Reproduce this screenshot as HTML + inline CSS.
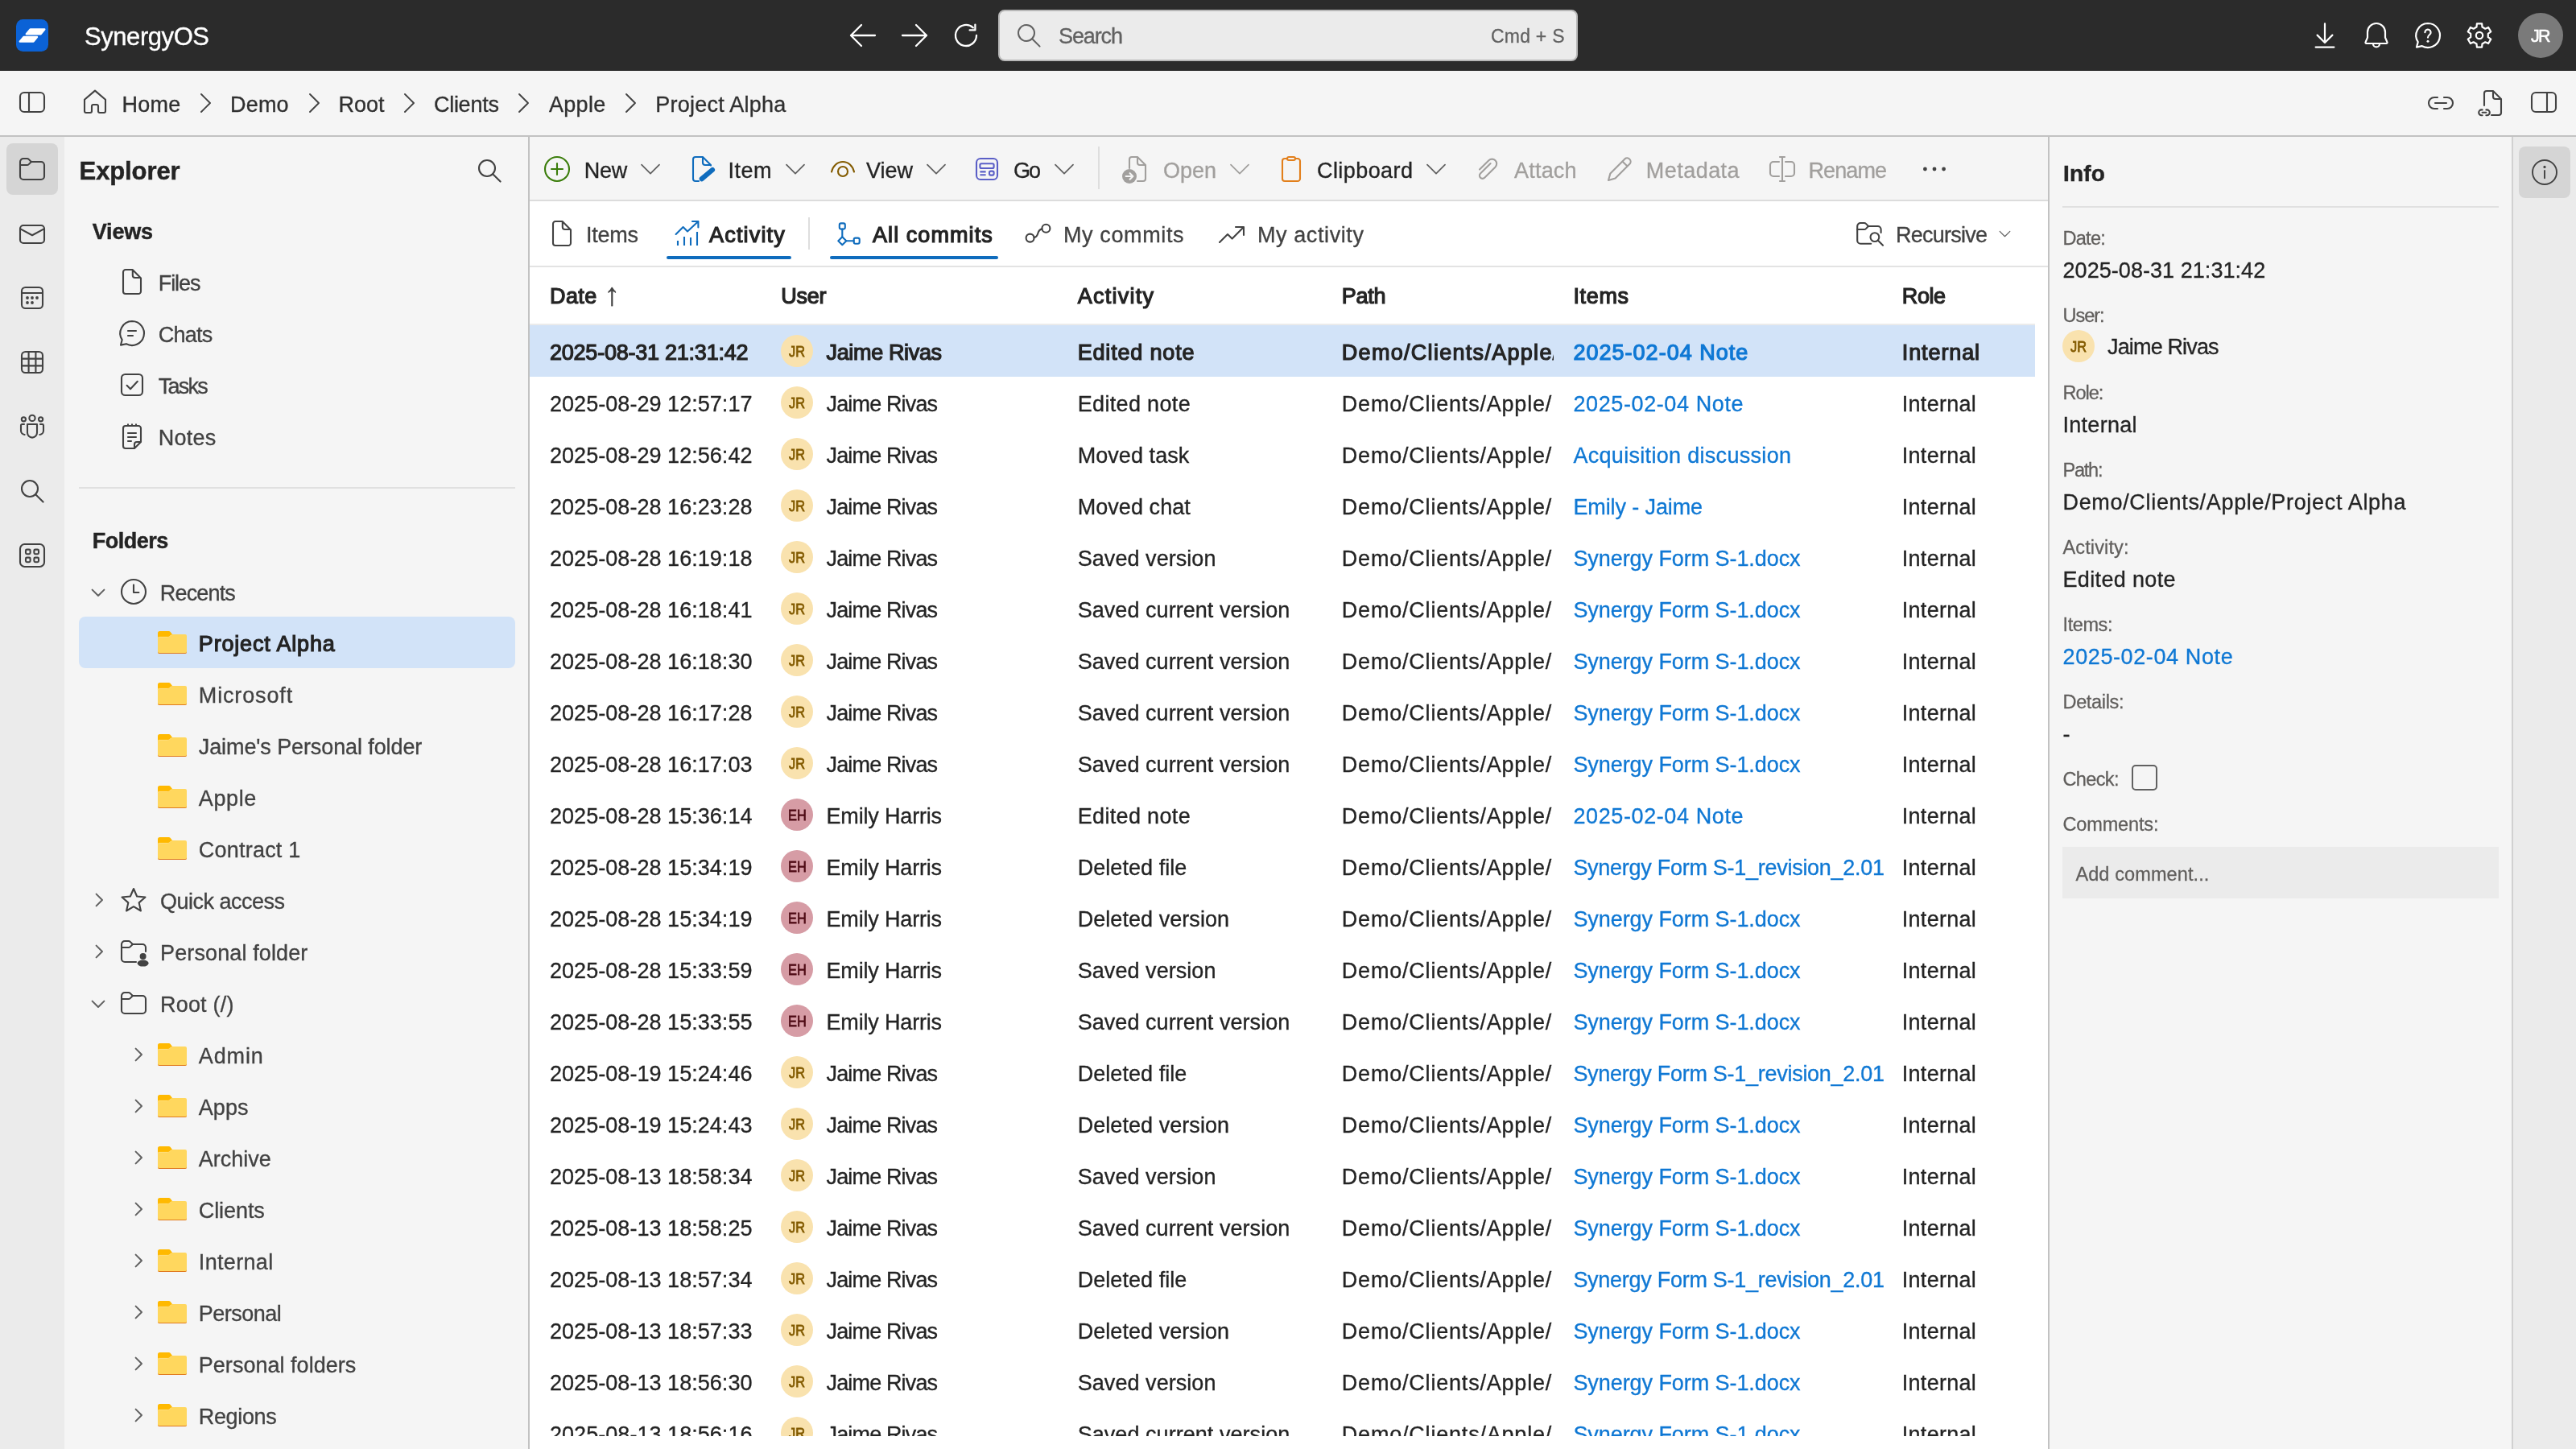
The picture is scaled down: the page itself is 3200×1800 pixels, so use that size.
<!DOCTYPE html>
<html lang="en"><head><meta charset="utf-8"><title>SynergyOS</title><style>
html,body{margin:0;padding:0}
body{width:3200px;height:1800px;position:relative;overflow:hidden;background:#fff;font-family:"Liberation Sans",sans-serif}
#root{position:absolute;left:0;top:0;width:3200px;height:1800px;will-change:transform}
.b{position:absolute}
.t{position:absolute;white-space:nowrap;line-height:40px;height:40px}
.ic{position:absolute;overflow:visible}
.clip{position:absolute;overflow:hidden}
</style></head><body><div id="root">
<div class="b" style="left:0px;top:0px;width:3200px;height:88px;background:#2b2b2b;"></div>
<div class="b" style="left:0px;top:88px;width:3200px;height:81px;background:#f5f5f5;"></div>
<div class="b" style="left:0px;top:168px;width:3200px;height:2px;background:#c2c2c2;"></div>
<div class="b" style="left:0px;top:170px;width:80px;height:1630px;background:#ebebeb;"></div>
<div class="b" style="left:80px;top:170px;width:577px;height:1630px;background:#f5f5f5;"></div>
<div class="b" style="left:656px;top:170px;width:2px;height:1630px;background:#c2c2c2;"></div>
<div class="b" style="left:658px;top:170px;width:1886px;height:78px;background:#f5f5f5;"></div>
<div class="b" style="left:658px;top:248px;width:1886px;height:2px;background:#dcdcdc;"></div>
<div class="b" style="left:658px;top:250px;width:1886px;height:1550px;background:#fff;"></div>
<div class="b" style="left:658px;top:330px;width:1886px;height:2px;background:#e3e3e3;"></div>
<div class="b" style="left:2544px;top:170px;width:2px;height:1630px;background:#c2c2c2;"></div>
<div class="b" style="left:2546px;top:170px;width:574px;height:1630px;background:#f5f5f5;"></div>
<div class="b" style="left:3120px;top:170px;width:2px;height:1630px;background:#d1d1d1;"></div>
<div class="b" style="left:3122px;top:170px;width:78px;height:1630px;background:#ebebeb;"></div>
<svg class="ic" style="left:20px;top:24px" width="40" height="40" viewBox="0 0 40 40"><rect width="40" height="40" rx="8.500" fill="#0b62d6"/><g fill="#fff" stroke="#fff" stroke-width="2.400" stroke-linejoin="round"><path d="M17.600 12.400H35.300L30.600 18.300H12.800z"/><path d="M9.700 21.900H26L21.500 27.600H4.800z"/></g></svg>
<div class="t" style="left:105px;top:25.5px;font-size:31px;color:#fff;-webkit-text-stroke:0.37px #fff;letter-spacing:-0.440px;">SynergyOS</div>
<svg class="ic" style="left:1051.5px;top:24px;color:#ffffff" width="40" height="40" viewBox="0 0 20 20" fill="none" stroke="currentColor" stroke-width="1.15" stroke-linecap="round" stroke-linejoin="round"><path d="M17.500 10h-15M9 3.500 2.500 10 9 16.500"/></svg>
<svg class="ic" style="left:1116px;top:24px;color:#ffffff" width="40" height="40" viewBox="0 0 20 20" fill="none" stroke="currentColor" stroke-width="1.15" stroke-linecap="round" stroke-linejoin="round"><path d="M2.500 10h15M11 3.500 17.500 10 11 16.500"/></svg>
<svg class="ic" style="left:1180px;top:24px;color:#ffffff" width="40" height="40" viewBox="0 0 20 20" fill="none" stroke="currentColor" stroke-width="1.15" stroke-linecap="round" stroke-linejoin="round"><path d="M16.500 10a6.500 6.500 0 1 1-2.100-4.800M15.700 3.300v3.400h-3.400"/></svg>
<div class="b" style="left:1240px;top:12px;width:720px;height:64px;background:#ebebeb;border:2px solid #b8b8b8;border-radius:8px;box-sizing:border-box;"></div>
<svg class="ic" style="left:1258px;top:24px;color:#616161" width="40" height="40" viewBox="0 0 20 20" fill="none" stroke="currentColor" stroke-width="1" stroke-linecap="round" stroke-linejoin="round"><circle cx="8.500" cy="8.500" r="5"/><path d="M12.100 12.100 16.800 16.800"/></svg>
<div class="t" style="left:1315px;top:25px;font-size:27px;color:#616161;-webkit-text-stroke:0.32px #616161;letter-spacing:-1.110px;">Search</div>
<div class="t" style="left:1852px;top:25px;font-size:23px;color:#616161;-webkit-text-stroke:0.28px #616161;letter-spacing:0.231px;">Cmd + S</div>
<svg class="ic" style="left:2868px;top:24px;color:#ffffff" width="40" height="40" viewBox="0 0 20 20" fill="none" stroke="currentColor" stroke-width="1.1" stroke-linecap="round" stroke-linejoin="round"><path d="M10 2.700v11.500M5.300 9.800 10 14.500l4.700-4.700M4.300 17.300h11.400"/></svg>
<svg class="ic" style="left:2932px;top:24px;color:#ffffff" width="40" height="40" viewBox="0 0 20 20" fill="none" stroke="currentColor" stroke-width="1.1" stroke-linecap="round" stroke-linejoin="round"><path d="M10 2.500a5.500 5.500 0 0 0-5.500 5.500v3.300l-1.200 2.800a.6.6 0 0 0 .55.9h12.300a.6.6 0 0 0 .55-.9l-1.200-2.800V8A5.500 5.500 0 0 0 10 2.500zM8 15.200a2 2 0 0 0 4 0"/></svg>
<svg class="ic" style="left:2996px;top:24px;color:#ffffff" width="40" height="40" viewBox="0 0 20 20" fill="none" stroke="currentColor" stroke-width="1.1" stroke-linecap="round" stroke-linejoin="round"><path d="M10 2.500a7.500 7.500 0 1 1-3.600 14.080L3 17.300l.85-3.250A7.500 7.500 0 0 1 10 2.500z"/><path d="M8.200 8.100a1.800 1.800 0 1 1 2.900 1.400c-.65.5-1.100.9-1.100 1.800"/><circle cx="10" cy="13.600" r=".75" fill="currentColor" stroke="none"/></svg>
<svg class="ic" style="left:3060px;top:24px;color:#ffffff" width="40" height="40" viewBox="0 0 20 20" fill="none" stroke="currentColor" stroke-width="1.1" stroke-linecap="round" stroke-linejoin="round"><path d="M8.25 4.79 L8.44 2.66 L11.56 2.66 L11.75 4.79 L13.64 5.87 L15.57 4.98 L17.13 7.68 L15.39 8.91 L15.39 11.09 L17.13 12.32 L15.57 15.02 L13.64 14.13 L11.75 15.21 L11.56 17.34 L8.44 17.34 L8.25 15.21 L6.36 14.13 L4.43 15.02 L2.87 12.32 L4.61 11.09 L4.61 8.91 L2.87 7.68 L4.43 4.98 L6.36 5.87Z"/><circle cx="10" cy="10" r="2.100"/></svg>
<div class="b" style="left:3128px;top:16px;width:56px;height:56px;border-radius:50%;background:#7a7a7a"></div>
<div class="t" style="left:3144px;top:25px;font-size:21.5px;color:#fff;letter-spacing:-1.777px;-webkit-text-stroke:0.6px #fff;">JR</div>
<svg class="ic" style="left:20px;top:107px;color:#424242" width="40" height="40" viewBox="0 0 20 20" fill="none" stroke="currentColor" stroke-width="1.05" stroke-linecap="round" stroke-linejoin="round"><rect x="2.5" y="4" width="15" height="12" rx="2.5"/><path d="M8 4v12"/></svg>
<svg class="ic" style="left:98px;top:107px;color:#424242" width="40" height="40" viewBox="0 0 20 20" fill="none" stroke="currentColor" stroke-width="1.05" stroke-linecap="round" stroke-linejoin="round"><path d="M3.5 8.4 10 2.8l6.5 5.6v7.1a1 1 0 0 1-1 1H13a1 1 0 0 1-1-1v-3a1 1 0 0 0-1-1H9a1 1 0 0 0-1 1v3a1 1 0 0 1-1 1H4.500a1 1 0 0 1-1-1z"/></svg>
<div class="t" style="left:151.6px;top:110px;font-size:27px;color:#303030;-webkit-text-stroke:0.32px #303030;letter-spacing:0.192px;">Home</div>
<div class="t" style="left:286px;top:110px;font-size:27px;color:#303030;-webkit-text-stroke:0.32px #303030;letter-spacing:0.192px;">Demo</div>
<div class="t" style="left:420.6px;top:110px;font-size:27px;color:#303030;-webkit-text-stroke:0.32px #303030;letter-spacing:-0.078px;">Root</div>
<div class="t" style="left:538.9px;top:110px;font-size:27px;color:#303030;-webkit-text-stroke:0.32px #303030;letter-spacing:-0.255px;">Clients</div>
<div class="t" style="left:681.9px;top:110px;font-size:27px;color:#303030;-webkit-text-stroke:0.32px #303030;letter-spacing:0.335px;">Apple</div>
<div class="t" style="left:814.3px;top:110px;font-size:27px;color:#303030;-webkit-text-stroke:0.32px #303030;letter-spacing:0.241px;">Project Alpha</div>
<svg class="ic" style="left:235px;top:108px;color:#424242" width="40" height="40" viewBox="0 0 20 20" fill="none" stroke="currentColor" stroke-width="0.95" stroke-linecap="round" stroke-linejoin="round"><path d="M7.5 4.500 13 10l-5.500 5.500"/></svg>
<svg class="ic" style="left:370px;top:108px;color:#424242" width="40" height="40" viewBox="0 0 20 20" fill="none" stroke="currentColor" stroke-width="0.95" stroke-linecap="round" stroke-linejoin="round"><path d="M7.5 4.500 13 10l-5.500 5.500"/></svg>
<svg class="ic" style="left:488.3px;top:108px;color:#424242" width="40" height="40" viewBox="0 0 20 20" fill="none" stroke="currentColor" stroke-width="0.95" stroke-linecap="round" stroke-linejoin="round"><path d="M7.5 4.500 13 10l-5.500 5.500"/></svg>
<svg class="ic" style="left:630.4px;top:108px;color:#424242" width="40" height="40" viewBox="0 0 20 20" fill="none" stroke="currentColor" stroke-width="0.95" stroke-linecap="round" stroke-linejoin="round"><path d="M7.5 4.500 13 10l-5.500 5.500"/></svg>
<svg class="ic" style="left:762.7px;top:108px;color:#424242" width="40" height="40" viewBox="0 0 20 20" fill="none" stroke="currentColor" stroke-width="0.95" stroke-linecap="round" stroke-linejoin="round"><path d="M7.5 4.500 13 10l-5.500 5.500"/></svg>
<svg class="ic" style="left:3012px;top:108px;color:#424242" width="40" height="40" viewBox="0 0 20 20" fill="none" stroke="currentColor" stroke-width="1.05" stroke-linecap="round" stroke-linejoin="round"><path d="M8 6.500H6a3.500 3.500 0 0 0 0 7h2M12 6.500h2a3.500 3.500 0 0 1 0 7h-2M6.500 10h7"/></svg>
<svg class="ic" style="left:3074.5px;top:108px;color:#424242" width="40" height="40" viewBox="0 0 20 20" fill="none" stroke="currentColor" stroke-width="1.05" stroke-linecap="round" stroke-linejoin="round"><path d="M10 17.500h4.500A1.500 1.500 0 0 0 16 16V7.500l-5-5H7A1.500 1.500 0 0 0 5.500 4v7.500M11 2.500V6a1.500 1.500 0 0 0 1.500 1.500H16"/><path d="M4.300 14.200H3.800a1.700 1.700 0 0 0 0 3.400h.5M6.700 14.200h.5a1.700 1.700 0 0 1 0 3.400h-.5M4.300 15.900h2.400"/></svg>
<svg class="ic" style="left:3140px;top:107px;color:#424242" width="40" height="40" viewBox="0 0 20 20" fill="none" stroke="currentColor" stroke-width="1.05" stroke-linecap="round" stroke-linejoin="round"><rect x="2.5" y="4" width="15" height="12" rx="2.5"/><path d="M12 4v12"/></svg>
<div class="b" style="left:8px;top:178px;width:64px;height:64px;background:#d5d5d5;border-radius:8px;"></div>
<svg class="ic" style="left:20px;top:190px;color:#424242" width="40" height="40" viewBox="0 0 20 20" fill="none" stroke="currentColor" stroke-width="1.05" stroke-linecap="round" stroke-linejoin="round"><path d="M2.500 5.500a2 2 0 0 1 2-2h2.300a1.500 1.500 0 0 1 1.060.44L9.420 5.500H15.500a2 2 0 0 1 2 2v7a2 2 0 0 1-2 2h-11a2 2 0 0 1-2-2z"/><path d="M2.500 7.500h4.300a1.500 1.500 0 0 0 1.060-.44L9.420 5.500"/></svg>
<svg class="ic" style="left:20px;top:270.5px;color:#424242" width="40" height="40" viewBox="0 0 20 20" fill="none" stroke="currentColor" stroke-width="1.05" stroke-linecap="round" stroke-linejoin="round"><rect x="2.500" y="4.500" width="15" height="11" rx="2"/><path d="M2.700 6.700 10 10.600l7.300-3.900"/></svg>
<svg class="ic" style="left:20px;top:350px;color:#424242" width="40" height="40" viewBox="0 0 20 20" fill="none" stroke="currentColor" stroke-width="1.05" stroke-linecap="round" stroke-linejoin="round"><rect x="3.500" y="3.500" width="13" height="13" rx="2.300"/><path d="M3.500 7h13"/><g fill="currentColor" stroke="none"><circle cx="7" cy="10" r=".95"/><circle cx="10" cy="10" r=".95"/><circle cx="13" cy="10" r=".95"/><circle cx="7" cy="13" r=".95"/><circle cx="10" cy="13" r=".95"/></g></svg>
<svg class="ic" style="left:20px;top:430px;color:#424242" width="40" height="40" viewBox="0 0 20 20" fill="none" stroke="currentColor" stroke-width="1.05" stroke-linecap="round" stroke-linejoin="round"><rect x="3.500" y="3.500" width="13" height="13" rx="2.300"/><path d="M3.500 7.800h13M3.500 12.200h13M7.800 3.500v13M12.200 3.500v13"/></svg>
<svg class="ic" style="left:20px;top:510px;color:#424242" width="40" height="40" viewBox="0 0 20 20" fill="none" stroke="currentColor" stroke-width="1.05" stroke-linecap="round" stroke-linejoin="round"><circle cx="10" cy="4.700" r="1.800"/><circle cx="4.700" cy="5.400" r="1.300"/><circle cx="15.300" cy="5.400" r="1.300"/><path d="M7 8.500h6v5.300a3 3 0 0 1-6 0z" /><path d="M5 8.500H3.700a.7.700 0 0 0-.7.700v3.300a2.500 2.500 0 0 0 2.300 2.500M15 8.500h1.300a.7.700 0 0 1 .7.700v3.300a2.500 2.500 0 0 1-2.300 2.500"/></svg>
<svg class="ic" style="left:20px;top:590px;color:#424242" width="40" height="40" viewBox="0 0 20 20" fill="none" stroke="currentColor" stroke-width="1.05" stroke-linecap="round" stroke-linejoin="round"><circle cx="8.500" cy="8.500" r="5"/><path d="M12.100 12.100 16.800 16.800"/></svg>
<svg class="ic" style="left:20px;top:670px;color:#424242" width="40" height="40" viewBox="0 0 20 20" fill="none" stroke="currentColor" stroke-width="1.05" stroke-linecap="round" stroke-linejoin="round"><rect x="2.500" y="3" width="15" height="14" rx="2.800"/><rect x="6" y="6.300" width="2.800" height="2.800" rx=".7"/><rect x="11.200" y="6.300" width="2.800" height="2.800" rx=".7"/><rect x="6" y="11.300" width="2.800" height="2.800" rx=".7"/><rect x="11.200" y="11.300" width="2.800" height="2.800" rx=".7"/></svg>
<div class="t" style="left:98.6px;top:192.5px;font-size:31px;color:#242424;font-weight:700;-webkit-text-stroke:0.45px #242424;letter-spacing:-0.110px;">Explorer</div>
<svg class="ic" style="left:588px;top:192px;color:#424242" width="40" height="40" viewBox="0 0 20 20" fill="none" stroke="currentColor" stroke-width="1.05" stroke-linecap="round" stroke-linejoin="round"><circle cx="8.500" cy="8.500" r="5"/><path d="M12.100 12.100 16.800 16.800"/></svg>
<div class="t" style="left:114.7px;top:268px;font-size:27px;color:#242424;font-weight:700;-webkit-text-stroke:0.45px #242424;letter-spacing:-0.164px;">Views</div>
<svg class="ic" style="left:144px;top:330px;color:#424242" width="40" height="40" viewBox="0 0 20 20" fill="none" stroke="currentColor" stroke-width="1.05" stroke-linecap="round" stroke-linejoin="round"><path d="M6 2.500h4.300l5.200 5.200V16a1.500 1.500 0 0 1-1.500 1.500H6A1.500 1.500 0 0 1 4.500 16V4A1.500 1.500 0 0 1 6 2.500zM10.400 2.700V6a1.500 1.500 0 0 0 1.500 1.500h3.400"/></svg>
<div class="t" style="left:196.8px;top:332px;font-size:27px;color:#424242;-webkit-text-stroke:0.32px #424242;letter-spacing:-1.102px;">Files</div>
<svg class="ic" style="left:144px;top:394px;color:#424242" width="40" height="40" viewBox="0 0 20 20" fill="none" stroke="currentColor" stroke-width="1.05" stroke-linecap="round" stroke-linejoin="round"><path d="M10 2.500a7.500 7.500 0 1 1-3.600 14.080L3 17.300l.85-3.250A7.500 7.500 0 0 1 10 2.500zM7.500 8.500h5M7.500 11.500h3"/></svg>
<div class="t" style="left:196.8px;top:396px;font-size:27px;color:#424242;-webkit-text-stroke:0.32px #424242;letter-spacing:-0.758px;">Chats</div>
<svg class="ic" style="left:144px;top:458px;color:#424242" width="40" height="40" viewBox="0 0 20 20" fill="none" stroke="currentColor" stroke-width="1.05" stroke-linecap="round" stroke-linejoin="round"><rect x="3.500" y="3.500" width="13" height="13" rx="2.300"/><path d="M6.800 10.400 9 12.600l4.400-4.700"/></svg>
<div class="t" style="left:196.8px;top:460px;font-size:27px;color:#424242;-webkit-text-stroke:0.32px #424242;letter-spacing:-1.754px;">Tasks</div>
<svg class="ic" style="left:144px;top:522px;color:#424242" width="40" height="40" viewBox="0 0 20 20" fill="none" stroke="currentColor" stroke-width="1.05" stroke-linecap="round" stroke-linejoin="round"><path d="M6 3.500h8A1.500 1.500 0 0 1 15.500 5v8.500l-4 4H6A1.500 1.500 0 0 1 4.500 16V5A1.500 1.500 0 0 1 6 3.500zM15.300 13.500H13a1.500 1.500 0 0 0-1.500 1.500v2.300M7.500 2.600v.900M10 2.600v.900M12.500 2.600v.900M7.500 8h5M7.500 10.500h5M7.500 13h2"/></svg>
<div class="t" style="left:196.8px;top:524px;font-size:27px;color:#424242;-webkit-text-stroke:0.32px #424242;letter-spacing:0.242px;">Notes</div>
<div class="b" style="left:98px;top:605px;width:542px;height:2px;background:#e0e0e0;"></div>
<div class="t" style="left:114.7px;top:652px;font-size:27px;color:#242424;font-weight:700;-webkit-text-stroke:0.45px #242424;letter-spacing:-0.503px;">Folders</div>
<svg class="ic" style="left:110px;top:723.5px" width="24" height="24" viewBox="0 0 12 12" fill="none" stroke="#616161" stroke-width="1" stroke-linecap="round" stroke-linejoin="round"><path d="M2.300 4.300 6 8l3.700-3.700"/></svg>
<svg class="ic" style="left:146px;top:715px;color:#424242" width="40" height="40" viewBox="0 0 20 20" fill="none" stroke="currentColor" stroke-width="1.05" stroke-linecap="round" stroke-linejoin="round"><circle cx="10" cy="10" r="7.500"/><path d="M10 5.800V10.500h3.200"/></svg>
<div class="t" style="left:198.8px;top:717px;font-size:27px;color:#424242;-webkit-text-stroke:0.32px #424242;letter-spacing:-0.842px;">Recents</div>
<div class="b" style="left:98px;top:766px;width:542px;height:64px;background:#d2e3f8;border-radius:8px;"></div>
<svg class="ic" style="left:196px;top:784px" width="36" height="28" viewBox="0 0 36 28"><path d="M0 2.500A2.500 2.500 0 0 1 2.500 0h11.200a2.500 2.500 0 0 1 1.800.760L18 4v6H0z" fill="#ffb900"/><path d="M0 9.300a1.500 1.500 0 0 1 1.500-1.500h11.200a2.500 2.500 0 0 0 1.800-.760L17.300 4.400a1.500 1.500 0 0 1 1-.4H34a2 2 0 0 1 2 2v20a2 2 0 0 1-2 2H2a2 2 0 0 1-2-2z" fill="#ffd75e"/><path d="M0 8.900a1.500 1.500 0 0 1 1.500-1.500h11.200a2.500 2.500 0 0 0 1.800-.760L17.300 4.400" fill="none" stroke="#ffe9a3" stroke-width=".8"/><path d="M0 25.500V26a2 2 0 0 0 2 2h32a2 2 0 0 0 2-2v-.5a2 2 0 0 1-2 1.500H2a2 2 0 0 1-2-1.500z" fill="#e07a1f"/></svg>
<div class="t" style="left:246.8px;top:780px;font-size:27px;color:#242424;-webkit-text-stroke:1.21px #242424;letter-spacing:0.825px;">Project Alpha</div>
<svg class="ic" style="left:196px;top:848px" width="36" height="28" viewBox="0 0 36 28"><path d="M0 2.500A2.500 2.500 0 0 1 2.500 0h11.200a2.500 2.500 0 0 1 1.800.760L18 4v6H0z" fill="#ffb900"/><path d="M0 9.300a1.500 1.500 0 0 1 1.500-1.500h11.200a2.500 2.500 0 0 0 1.800-.760L17.300 4.400a1.500 1.500 0 0 1 1-.4H34a2 2 0 0 1 2 2v20a2 2 0 0 1-2 2H2a2 2 0 0 1-2-2z" fill="#ffd75e"/><path d="M0 8.900a1.500 1.500 0 0 1 1.500-1.500h11.200a2.500 2.500 0 0 0 1.800-.760L17.300 4.400" fill="none" stroke="#ffe9a3" stroke-width=".8"/><path d="M0 25.500V26a2 2 0 0 0 2 2h32a2 2 0 0 0 2-2v-.5a2 2 0 0 1-2 1.500H2a2 2 0 0 1-2-1.500z" fill="#e07a1f"/></svg>
<div class="t" style="left:246.8px;top:844px;font-size:27px;color:#424242;-webkit-text-stroke:0.32px #424242;letter-spacing:0.860px;">Microsoft</div>
<svg class="ic" style="left:196px;top:912px" width="36" height="28" viewBox="0 0 36 28"><path d="M0 2.500A2.500 2.500 0 0 1 2.500 0h11.200a2.500 2.500 0 0 1 1.800.760L18 4v6H0z" fill="#ffb900"/><path d="M0 9.300a1.500 1.500 0 0 1 1.500-1.500h11.200a2.500 2.500 0 0 0 1.800-.760L17.300 4.400a1.500 1.500 0 0 1 1-.4H34a2 2 0 0 1 2 2v20a2 2 0 0 1-2 2H2a2 2 0 0 1-2-2z" fill="#ffd75e"/><path d="M0 8.900a1.500 1.500 0 0 1 1.500-1.500h11.200a2.500 2.500 0 0 0 1.800-.760L17.300 4.400" fill="none" stroke="#ffe9a3" stroke-width=".8"/><path d="M0 25.500V26a2 2 0 0 0 2 2h32a2 2 0 0 0 2-2v-.5a2 2 0 0 1-2 1.500H2a2 2 0 0 1-2-1.500z" fill="#e07a1f"/></svg>
<div class="t" style="left:246.8px;top:908px;font-size:27px;color:#424242;-webkit-text-stroke:0.32px #424242;letter-spacing:-0.104px;">Jaime&#x27;s Personal folder</div>
<svg class="ic" style="left:196px;top:976px" width="36" height="28" viewBox="0 0 36 28"><path d="M0 2.500A2.500 2.500 0 0 1 2.500 0h11.200a2.500 2.500 0 0 1 1.800.760L18 4v6H0z" fill="#ffb900"/><path d="M0 9.300a1.500 1.500 0 0 1 1.500-1.500h11.200a2.500 2.500 0 0 0 1.800-.760L17.300 4.400a1.500 1.500 0 0 1 1-.4H34a2 2 0 0 1 2 2v20a2 2 0 0 1-2 2H2a2 2 0 0 1-2-2z" fill="#ffd75e"/><path d="M0 8.900a1.500 1.500 0 0 1 1.500-1.500h11.200a2.500 2.500 0 0 0 1.800-.760L17.300 4.400" fill="none" stroke="#ffe9a3" stroke-width=".8"/><path d="M0 25.500V26a2 2 0 0 0 2 2h32a2 2 0 0 0 2-2v-.5a2 2 0 0 1-2 1.500H2a2 2 0 0 1-2-1.500z" fill="#e07a1f"/></svg>
<div class="t" style="left:246.8px;top:972px;font-size:27px;color:#424242;-webkit-text-stroke:0.32px #424242;letter-spacing:0.610px;">Apple</div>
<svg class="ic" style="left:196px;top:1040px" width="36" height="28" viewBox="0 0 36 28"><path d="M0 2.500A2.500 2.500 0 0 1 2.500 0h11.200a2.500 2.500 0 0 1 1.800.760L18 4v6H0z" fill="#ffb900"/><path d="M0 9.300a1.500 1.500 0 0 1 1.500-1.500h11.200a2.500 2.500 0 0 0 1.800-.760L17.300 4.400a1.500 1.500 0 0 1 1-.4H34a2 2 0 0 1 2 2v20a2 2 0 0 1-2 2H2a2 2 0 0 1-2-2z" fill="#ffd75e"/><path d="M0 8.900a1.500 1.500 0 0 1 1.500-1.500h11.200a2.500 2.500 0 0 0 1.800-.760L17.300 4.400" fill="none" stroke="#ffe9a3" stroke-width=".8"/><path d="M0 25.500V26a2 2 0 0 0 2 2h32a2 2 0 0 0 2-2v-.5a2 2 0 0 1-2 1.500H2a2 2 0 0 1-2-1.500z" fill="#e07a1f"/></svg>
<div class="t" style="left:246.8px;top:1036px;font-size:27px;color:#424242;-webkit-text-stroke:0.32px #424242;letter-spacing:0.215px;">Contract 1</div>
<svg class="ic" style="left:111.4px;top:1106px" width="24" height="24" viewBox="0 0 12 12" fill="none" stroke="#616161" stroke-width="1" stroke-linecap="round" stroke-linejoin="round"><path d="M4.300 2.300 8 6 4.300 9.700"/></svg>
<svg class="ic" style="left:146px;top:1098px;color:#424242" width="40" height="40" viewBox="0 0 20 20" fill="none" stroke="currentColor" stroke-width="1.05" stroke-linecap="round" stroke-linejoin="round"><path d="M10.00 3.00 L12.06 7.77 L17.23 8.25 L13.33 11.68 L14.47 16.75 L10.00 14.10 L5.53 16.75 L6.67 11.68 L2.77 8.25 L7.94 7.77Z"/></svg>
<div class="t" style="left:199px;top:1100px;font-size:27px;color:#424242;-webkit-text-stroke:0.32px #424242;letter-spacing:-0.514px;">Quick access</div>
<svg class="ic" style="left:111.4px;top:1170px" width="24" height="24" viewBox="0 0 12 12" fill="none" stroke="#616161" stroke-width="1" stroke-linecap="round" stroke-linejoin="round"><path d="M4.300 2.300 8 6 4.300 9.700"/></svg>
<svg class="ic" style="left:146px;top:1162px;color:#424242" width="40" height="40" viewBox="0 0 20 20" fill="none" stroke="currentColor" stroke-width="1.05" stroke-linecap="round" stroke-linejoin="round"><path d="M11.500 16.500H4.500a2 2 0 0 1-2-2v-9a2 2 0 0 1 2-2h2.300a1.500 1.500 0 0 1 1.060.44L9.420 5.500H15.500a2 2 0 0 1 2 2V10"/><path d="M2.500 7.500h4.300a1.500 1.500 0 0 0 1.060-.44L9.420 5.500"/><circle cx="15.800" cy="13" r="2" fill="currentColor" stroke="none"/><ellipse cx="15.800" cy="17.300" rx="3.500" ry="2" fill="currentColor" stroke="none"/></svg>
<div class="t" style="left:199px;top:1164px;font-size:27px;color:#424242;-webkit-text-stroke:0.32px #424242;letter-spacing:0.121px;">Personal folder</div>
<svg class="ic" style="left:110px;top:1235px" width="24" height="24" viewBox="0 0 12 12" fill="none" stroke="#616161" stroke-width="1" stroke-linecap="round" stroke-linejoin="round"><path d="M2.300 4.300 6 8l3.700-3.700"/></svg>
<svg class="ic" style="left:146px;top:1226px;color:#424242" width="40" height="40" viewBox="0 0 20 20" fill="none" stroke="currentColor" stroke-width="1.05" stroke-linecap="round" stroke-linejoin="round"><path d="M2.500 5.500a2 2 0 0 1 2-2h2.300a1.500 1.500 0 0 1 1.060.44L9.420 5.500H15.500a2 2 0 0 1 2 2v7a2 2 0 0 1-2 2h-11a2 2 0 0 1-2-2z"/><path d="M2.500 7.500h4.300a1.500 1.500 0 0 0 1.060-.44L9.420 5.500"/></svg>
<div class="t" style="left:199px;top:1228px;font-size:27px;color:#424242;-webkit-text-stroke:0.32px #424242;letter-spacing:0.197px;">Root (/)</div>
<svg class="ic" style="left:159.5px;top:1298px" width="24" height="24" viewBox="0 0 12 12" fill="none" stroke="#616161" stroke-width="1" stroke-linecap="round" stroke-linejoin="round"><path d="M4.300 2.300 8 6 4.300 9.700"/></svg>
<svg class="ic" style="left:196px;top:1296px" width="36" height="28" viewBox="0 0 36 28"><path d="M0 2.500A2.500 2.500 0 0 1 2.500 0h11.200a2.500 2.500 0 0 1 1.800.760L18 4v6H0z" fill="#ffb900"/><path d="M0 9.300a1.500 1.500 0 0 1 1.500-1.500h11.200a2.500 2.500 0 0 0 1.800-.760L17.300 4.400a1.500 1.500 0 0 1 1-.4H34a2 2 0 0 1 2 2v20a2 2 0 0 1-2 2H2a2 2 0 0 1-2-2z" fill="#ffd75e"/><path d="M0 8.900a1.500 1.500 0 0 1 1.500-1.500h11.200a2.500 2.500 0 0 0 1.800-.760L17.300 4.400" fill="none" stroke="#ffe9a3" stroke-width=".8"/><path d="M0 25.500V26a2 2 0 0 0 2 2h32a2 2 0 0 0 2-2v-.5a2 2 0 0 1-2 1.500H2a2 2 0 0 1-2-1.500z" fill="#e07a1f"/></svg>
<div class="t" style="left:246.8px;top:1292px;font-size:27px;color:#424242;-webkit-text-stroke:0.32px #424242;letter-spacing:0.866px;">Admin</div>
<svg class="ic" style="left:159.5px;top:1362px" width="24" height="24" viewBox="0 0 12 12" fill="none" stroke="#616161" stroke-width="1" stroke-linecap="round" stroke-linejoin="round"><path d="M4.300 2.300 8 6 4.300 9.700"/></svg>
<svg class="ic" style="left:196px;top:1360px" width="36" height="28" viewBox="0 0 36 28"><path d="M0 2.500A2.500 2.500 0 0 1 2.500 0h11.200a2.500 2.500 0 0 1 1.800.760L18 4v6H0z" fill="#ffb900"/><path d="M0 9.300a1.500 1.500 0 0 1 1.500-1.500h11.200a2.500 2.500 0 0 0 1.800-.760L17.300 4.400a1.500 1.500 0 0 1 1-.4H34a2 2 0 0 1 2 2v20a2 2 0 0 1-2 2H2a2 2 0 0 1-2-2z" fill="#ffd75e"/><path d="M0 8.900a1.500 1.500 0 0 1 1.500-1.500h11.200a2.500 2.500 0 0 0 1.800-.760L17.300 4.400" fill="none" stroke="#ffe9a3" stroke-width=".8"/><path d="M0 25.500V26a2 2 0 0 0 2 2h32a2 2 0 0 0 2-2v-.5a2 2 0 0 1-2 1.500H2a2 2 0 0 1-2-1.500z" fill="#e07a1f"/></svg>
<div class="t" style="left:246.8px;top:1356px;font-size:27px;color:#424242;-webkit-text-stroke:0.32px #424242;letter-spacing:0.052px;">Apps</div>
<svg class="ic" style="left:159.5px;top:1426px" width="24" height="24" viewBox="0 0 12 12" fill="none" stroke="#616161" stroke-width="1" stroke-linecap="round" stroke-linejoin="round"><path d="M4.300 2.300 8 6 4.300 9.700"/></svg>
<svg class="ic" style="left:196px;top:1424px" width="36" height="28" viewBox="0 0 36 28"><path d="M0 2.500A2.500 2.500 0 0 1 2.500 0h11.200a2.500 2.500 0 0 1 1.800.760L18 4v6H0z" fill="#ffb900"/><path d="M0 9.300a1.500 1.500 0 0 1 1.500-1.500h11.200a2.500 2.500 0 0 0 1.800-.760L17.300 4.400a1.500 1.500 0 0 1 1-.4H34a2 2 0 0 1 2 2v20a2 2 0 0 1-2 2H2a2 2 0 0 1-2-2z" fill="#ffd75e"/><path d="M0 8.900a1.500 1.500 0 0 1 1.500-1.500h11.200a2.500 2.500 0 0 0 1.800-.760L17.300 4.400" fill="none" stroke="#ffe9a3" stroke-width=".8"/><path d="M0 25.500V26a2 2 0 0 0 2 2h32a2 2 0 0 0 2-2v-.5a2 2 0 0 1-2 1.500H2a2 2 0 0 1-2-1.500z" fill="#e07a1f"/></svg>
<div class="t" style="left:246.8px;top:1420px;font-size:27px;color:#424242;-webkit-text-stroke:0.32px #424242;letter-spacing:-0.006px;">Archive</div>
<svg class="ic" style="left:159.5px;top:1490px" width="24" height="24" viewBox="0 0 12 12" fill="none" stroke="#616161" stroke-width="1" stroke-linecap="round" stroke-linejoin="round"><path d="M4.300 2.300 8 6 4.300 9.700"/></svg>
<svg class="ic" style="left:196px;top:1488px" width="36" height="28" viewBox="0 0 36 28"><path d="M0 2.500A2.500 2.500 0 0 1 2.500 0h11.200a2.500 2.500 0 0 1 1.800.760L18 4v6H0z" fill="#ffb900"/><path d="M0 9.300a1.500 1.500 0 0 1 1.500-1.500h11.200a2.500 2.500 0 0 0 1.800-.760L17.300 4.400a1.500 1.500 0 0 1 1-.4H34a2 2 0 0 1 2 2v20a2 2 0 0 1-2 2H2a2 2 0 0 1-2-2z" fill="#ffd75e"/><path d="M0 8.900a1.500 1.500 0 0 1 1.500-1.500h11.200a2.500 2.500 0 0 0 1.800-.760L17.300 4.400" fill="none" stroke="#ffe9a3" stroke-width=".8"/><path d="M0 25.500V26a2 2 0 0 0 2 2h32a2 2 0 0 0 2-2v-.5a2 2 0 0 1-2 1.500H2a2 2 0 0 1-2-1.500z" fill="#e07a1f"/></svg>
<div class="t" style="left:246.8px;top:1484px;font-size:27px;color:#424242;-webkit-text-stroke:0.32px #424242;letter-spacing:-0.089px;">Clients</div>
<svg class="ic" style="left:159.5px;top:1554px" width="24" height="24" viewBox="0 0 12 12" fill="none" stroke="#616161" stroke-width="1" stroke-linecap="round" stroke-linejoin="round"><path d="M4.300 2.300 8 6 4.300 9.700"/></svg>
<svg class="ic" style="left:196px;top:1552px" width="36" height="28" viewBox="0 0 36 28"><path d="M0 2.500A2.500 2.500 0 0 1 2.500 0h11.200a2.500 2.500 0 0 1 1.800.760L18 4v6H0z" fill="#ffb900"/><path d="M0 9.300a1.500 1.500 0 0 1 1.500-1.500h11.200a2.500 2.500 0 0 0 1.800-.760L17.300 4.400a1.500 1.500 0 0 1 1-.4H34a2 2 0 0 1 2 2v20a2 2 0 0 1-2 2H2a2 2 0 0 1-2-2z" fill="#ffd75e"/><path d="M0 8.900a1.500 1.500 0 0 1 1.500-1.500h11.200a2.500 2.500 0 0 0 1.800-.760L17.300 4.400" fill="none" stroke="#ffe9a3" stroke-width=".8"/><path d="M0 25.500V26a2 2 0 0 0 2 2h32a2 2 0 0 0 2-2v-.5a2 2 0 0 1-2 1.500H2a2 2 0 0 1-2-1.500z" fill="#e07a1f"/></svg>
<div class="t" style="left:246.8px;top:1548px;font-size:27px;color:#424242;-webkit-text-stroke:0.32px #424242;letter-spacing:0.334px;">Internal</div>
<svg class="ic" style="left:159.5px;top:1618px" width="24" height="24" viewBox="0 0 12 12" fill="none" stroke="#616161" stroke-width="1" stroke-linecap="round" stroke-linejoin="round"><path d="M4.300 2.300 8 6 4.300 9.700"/></svg>
<svg class="ic" style="left:196px;top:1616px" width="36" height="28" viewBox="0 0 36 28"><path d="M0 2.500A2.500 2.500 0 0 1 2.500 0h11.200a2.500 2.500 0 0 1 1.800.760L18 4v6H0z" fill="#ffb900"/><path d="M0 9.300a1.500 1.500 0 0 1 1.500-1.500h11.200a2.500 2.500 0 0 0 1.800-.760L17.300 4.400a1.500 1.500 0 0 1 1-.4H34a2 2 0 0 1 2 2v20a2 2 0 0 1-2 2H2a2 2 0 0 1-2-2z" fill="#ffd75e"/><path d="M0 8.900a1.500 1.500 0 0 1 1.500-1.500h11.200a2.500 2.500 0 0 0 1.800-.760L17.300 4.400" fill="none" stroke="#ffe9a3" stroke-width=".8"/><path d="M0 25.500V26a2 2 0 0 0 2 2h32a2 2 0 0 0 2-2v-.5a2 2 0 0 1-2 1.500H2a2 2 0 0 1-2-1.500z" fill="#e07a1f"/></svg>
<div class="t" style="left:246.8px;top:1612px;font-size:27px;color:#424242;-webkit-text-stroke:0.32px #424242;letter-spacing:-0.510px;">Personal</div>
<svg class="ic" style="left:159.5px;top:1682px" width="24" height="24" viewBox="0 0 12 12" fill="none" stroke="#616161" stroke-width="1" stroke-linecap="round" stroke-linejoin="round"><path d="M4.300 2.300 8 6 4.300 9.700"/></svg>
<svg class="ic" style="left:196px;top:1680px" width="36" height="28" viewBox="0 0 36 28"><path d="M0 2.500A2.500 2.500 0 0 1 2.500 0h11.200a2.500 2.500 0 0 1 1.800.760L18 4v6H0z" fill="#ffb900"/><path d="M0 9.300a1.500 1.500 0 0 1 1.500-1.500h11.200a2.500 2.500 0 0 0 1.800-.760L17.300 4.400a1.500 1.500 0 0 1 1-.4H34a2 2 0 0 1 2 2v20a2 2 0 0 1-2 2H2a2 2 0 0 1-2-2z" fill="#ffd75e"/><path d="M0 8.900a1.500 1.500 0 0 1 1.500-1.500h11.200a2.500 2.500 0 0 0 1.800-.760L17.300 4.400" fill="none" stroke="#ffe9a3" stroke-width=".8"/><path d="M0 25.500V26a2 2 0 0 0 2 2h32a2 2 0 0 0 2-2v-.5a2 2 0 0 1-2 1.500H2a2 2 0 0 1-2-1.500z" fill="#e07a1f"/></svg>
<div class="t" style="left:246.8px;top:1676px;font-size:27px;color:#424242;-webkit-text-stroke:0.32px #424242;letter-spacing:0.026px;">Personal folders</div>
<svg class="ic" style="left:159.5px;top:1746px" width="24" height="24" viewBox="0 0 12 12" fill="none" stroke="#616161" stroke-width="1" stroke-linecap="round" stroke-linejoin="round"><path d="M4.300 2.300 8 6 4.300 9.700"/></svg>
<svg class="ic" style="left:196px;top:1744px" width="36" height="28" viewBox="0 0 36 28"><path d="M0 2.500A2.500 2.500 0 0 1 2.500 0h11.200a2.500 2.500 0 0 1 1.800.760L18 4v6H0z" fill="#ffb900"/><path d="M0 9.300a1.500 1.500 0 0 1 1.500-1.500h11.200a2.500 2.500 0 0 0 1.800-.760L17.300 4.400a1.500 1.500 0 0 1 1-.4H34a2 2 0 0 1 2 2v20a2 2 0 0 1-2 2H2a2 2 0 0 1-2-2z" fill="#ffd75e"/><path d="M0 8.900a1.500 1.500 0 0 1 1.500-1.500h11.200a2.500 2.500 0 0 0 1.800-.760L17.300 4.400" fill="none" stroke="#ffe9a3" stroke-width=".8"/><path d="M0 25.500V26a2 2 0 0 0 2 2h32a2 2 0 0 0 2-2v-.5a2 2 0 0 1-2 1.500H2a2 2 0 0 1-2-1.500z" fill="#e07a1f"/></svg>
<div class="t" style="left:246.8px;top:1740px;font-size:27px;color:#424242;-webkit-text-stroke:0.32px #424242;letter-spacing:-0.344px;">Regions</div>
<svg class="ic" style="left:672px;top:190px;color:#3b7d0b" width="40" height="40" viewBox="0 0 20 20" fill="none" stroke="currentColor" stroke-width="1.05" stroke-linecap="round" stroke-linejoin="round"><circle cx="10" cy="10" r="7.500"/><path d="M10 6.500v7M6.500 10h7"/></svg>
<div class="t" style="left:725.7px;top:192px;font-size:27px;color:#242424;-webkit-text-stroke:0.32px #242424;letter-spacing:-0.207px;">New</div>
<svg class="ic" style="left:787.7px;top:190px;color:#616161" width="40" height="40" viewBox="0 0 20 20" fill="none" stroke="currentColor" stroke-width="0.9" stroke-linecap="round" stroke-linejoin="round"><path d="M4.500 7.300 10 12.800l5.500-5.500"/></svg>
<svg class="ic" style="left:854px;top:190px;color:#0f6cbd" width="40" height="40" viewBox="0 0 20 20" fill="none" stroke="currentColor" stroke-width="1.05" stroke-linecap="round" stroke-linejoin="round"><path d="M7 17.500H5A1.500 1.500 0 0 1 3.500 16V4A1.500 1.500 0 0 1 5 2.500h4.500l5 5v.3M9.500 2.700V6A1.500 1.500 0 0 0 11 7.500h3.300"/><path d="M8.900 16.100 15.500 10.500" stroke-width="3.100"/></svg>
<div class="t" style="left:904.4px;top:192px;font-size:27px;color:#242424;-webkit-text-stroke:0.32px #242424;letter-spacing:0.563px;">Item</div>
<svg class="ic" style="left:967.5px;top:190px;color:#616161" width="40" height="40" viewBox="0 0 20 20" fill="none" stroke="currentColor" stroke-width="0.9" stroke-linecap="round" stroke-linejoin="round"><path d="M4.500 7.300 10 12.800l5.500-5.500"/></svg>
<svg class="ic" style="left:1027px;top:190px;color:#835b00" width="40" height="40" viewBox="0 0 20 20" fill="none" stroke="currentColor" stroke-width="1.05" stroke-linecap="round" stroke-linejoin="round"><path d="M3 11.700C3.800 8.100 6.600 5.500 10 5.500s6.200 2.600 7 6.200"/><circle cx="10" cy="11.500" r="3"/></svg>
<div class="t" style="left:1075.9px;top:192px;font-size:27px;color:#242424;-webkit-text-stroke:0.32px #242424;letter-spacing:-0.012px;">View</div>
<svg class="ic" style="left:1142.5px;top:190px;color:#616161" width="40" height="40" viewBox="0 0 20 20" fill="none" stroke="currentColor" stroke-width="0.9" stroke-linecap="round" stroke-linejoin="round"><path d="M4.500 7.300 10 12.800l5.500-5.500"/></svg>
<svg class="ic" style="left:1206px;top:190px;color:#5b5fc7" width="40" height="40" viewBox="0 0 20 20" fill="none" stroke="currentColor" stroke-width="1.05" stroke-linecap="round" stroke-linejoin="round"><rect x="3.500" y="3.500" width="13" height="13" rx="2.500"/><rect x="5.700" y="6.600" width="8.600" height="2.900" rx=".9"/><path d="M5.700 11.700h3.600M5.700 13.600h3.600" stroke-linecap="butt"/><rect x="11.500" y="11.300" width="2.800" height="2.500" rx=".9"/></svg>
<div class="t" style="left:1259px;top:192px;font-size:27px;color:#242424;-webkit-text-stroke:0.32px #242424;letter-spacing:-2.018px;">Go</div>
<svg class="ic" style="left:1302px;top:190px;color:#616161" width="40" height="40" viewBox="0 0 20 20" fill="none" stroke="currentColor" stroke-width="0.9" stroke-linecap="round" stroke-linejoin="round"><path d="M4.500 7.300 10 12.800l5.500-5.500"/></svg>
<div class="b" style="left:1364px;top:182px;width:2px;height:53px;background:#dedede;"></div>
<svg class="ic" style="left:1390.5px;top:190px;color:#a19f9d" width="40" height="40" viewBox="0 0 20 20" fill="none" stroke="currentColor" stroke-width="1.05" stroke-linecap="round" stroke-linejoin="round"><path d="M11 17.500h3.500A1.500 1.500 0 0 0 16 16V7.500l-5-5H7.500A1.500 1.500 0 0 0 6 4v5.500M11 2.700V6a1.500 1.500 0 0 0 1.500 1.500h3.300"/><circle cx="6" cy="14.500" r="4.500" fill="currentColor" stroke="none"/><path d="M3.800 14.500h4.200M6.300 12.600l1.900 1.900-1.900 1.900" stroke="#f5f5f5"/></svg>
<div class="t" style="left:1445px;top:192px;font-size:27px;color:#a19f9d;-webkit-text-stroke:0.32px #a19f9d;letter-spacing:-0.017px;">Open</div>
<svg class="ic" style="left:1520px;top:190px;color:#a19f9d" width="40" height="40" viewBox="0 0 20 20" fill="none" stroke="currentColor" stroke-width="0.9" stroke-linecap="round" stroke-linejoin="round"><path d="M4.500 7.300 10 12.800l5.500-5.500"/></svg>
<svg class="ic" style="left:1583.5px;top:190px;color:#e27f1b" width="40" height="40" viewBox="0 0 20 20" fill="none" stroke="currentColor" stroke-width="1.05" stroke-linecap="round" stroke-linejoin="round"><path d="M7.500 3.500H6A1.500 1.500 0 0 0 4.500 5v11A1.500 1.500 0 0 0 6 17.500h8a1.500 1.500 0 0 0 1.500-1.500V5A1.500 1.500 0 0 0 14 3.500h-1.500"/><rect x="7.500" y="2.500" width="5" height="2" rx="1"/></svg>
<div class="t" style="left:1636px;top:192px;font-size:27px;color:#242424;-webkit-text-stroke:0.32px #242424;letter-spacing:0.428px;">Clipboard</div>
<svg class="ic" style="left:1764px;top:190px;color:#616161" width="40" height="40" viewBox="0 0 20 20" fill="none" stroke="currentColor" stroke-width="0.9" stroke-linecap="round" stroke-linejoin="round"><path d="M4.500 7.300 10 12.800l5.500-5.500"/></svg>
<svg class="ic" style="left:1828px;top:190px;color:#a19f9d" width="40" height="40" viewBox="0 0 20 20" fill="none" stroke="currentColor" stroke-width="1.05" stroke-linecap="round" stroke-linejoin="round"><path d="M5.300 10.800 11 5.100a2.900 2.900 0 0 1 4.100 4.100l-6.700 6.700a1.800 1.800 0 0 1-2.600-2.600l6.300-6.300" transform="translate(-.3 -.5)"/></svg>
<div class="t" style="left:1881px;top:192px;font-size:27px;color:#a19f9d;-webkit-text-stroke:0.32px #a19f9d;letter-spacing:0.211px;">Attach</div>
<svg class="ic" style="left:1992px;top:190px;color:#a19f9d" width="40" height="40" viewBox="0 0 20 20" fill="none" stroke="currentColor" stroke-width="1.05" stroke-linecap="round" stroke-linejoin="round"><path d="M13.200 3.700a2.200 2.200 0 0 1 3.100 3.100L7.300 15.800 3 17l1.200-4.300zM11.700 5.200l3.100 3.100"/></svg>
<div class="t" style="left:2044.8px;top:192px;font-size:27px;color:#a19f9d;-webkit-text-stroke:0.32px #a19f9d;letter-spacing:0.460px;">Metadata</div>
<svg class="ic" style="left:2194px;top:190px;color:#a19f9d" width="40" height="40" viewBox="0 0 20 20" fill="none" stroke="currentColor" stroke-width="1.05" stroke-linecap="round" stroke-linejoin="round"><path d="M8 5.500H4.500a2 2 0 0 0-2 2v5a2 2 0 0 0 2 2H8M12 5.500h3.500a2 2 0 0 1 2 2v5a2 2 0 0 1-2 2H12M10 2.500v15M8.500 2.500h3M8.500 17.500h3"/></svg>
<div class="t" style="left:2246.5px;top:192px;font-size:27px;color:#a19f9d;-webkit-text-stroke:0.32px #a19f9d;letter-spacing:-0.912px;">Rename</div>
<svg class="ic" style="left:2383px;top:190px;color:#424242" width="40" height="40" viewBox="0 0 20 20" fill="none" stroke="currentColor" stroke-width="1.05" stroke-linecap="round" stroke-linejoin="round"><g fill="currentColor" stroke="none"><circle cx="4.200" cy="10" r="1.200"/><circle cx="10" cy="10" r="1.200"/><circle cx="15.800" cy="10" r="1.200"/></g></svg>
<svg class="ic" style="left:678px;top:270px;color:#424242" width="40" height="40" viewBox="0 0 20 20" fill="none" stroke="currentColor" stroke-width="1.05" stroke-linecap="round" stroke-linejoin="round"><path d="M6 2.500h4.300l5.200 5.200V16a1.500 1.500 0 0 1-1.500 1.500H6A1.500 1.500 0 0 1 4.500 16V4A1.500 1.500 0 0 1 6 2.500zM10.400 2.700V6a1.500 1.500 0 0 0 1.500 1.500h3.400"/></svg>
<div class="t" style="left:728px;top:272px;font-size:27px;color:#424242;-webkit-text-stroke:0.32px #424242;letter-spacing:-0.253px;">Items</div>
<svg class="ic" style="left:833.5px;top:270px;color:#0f6cbd" width="40" height="40" viewBox="0 0 20 20" fill="none" stroke="currentColor" stroke-width="1.05" stroke-linecap="round" stroke-linejoin="round"><path d="M2.800 10.500 7.300 6l2.700 2.700 6.700-6.200M13 2.500h3.700v3.700"/><path d="M4 14.500v3M8 12v5.500M12 12.500v5M16 9v8.500" stroke-linecap="butt"/></svg>
<div class="t" style="left:881px;top:272px;font-size:27px;color:#242424;-webkit-text-stroke:1.21px #242424;letter-spacing:1.184px;">Activity</div>
<div class="b" style="left:828px;top:318px;width:155px;height:4px;background:#0f6cbd;border-radius:2px;"></div>
<div class="b" style="left:1004px;top:270px;width:2px;height:40px;background:#dedede;"></div>
<svg class="ic" style="left:1035px;top:270px;color:#0f6cbd" width="40" height="40" viewBox="0 0 20 20" fill="none" stroke="currentColor" stroke-width="1.05" stroke-linecap="round" stroke-linejoin="round"><rect x="3.900" y="3.700" width="3.500" height="3.600" rx="1"/><path d="M5.650 7.300v4.600M8.100 14.600h4.700"/><path d="M5.650 12.100 8.150 14.600 5.650 17.100 3.150 14.600z"/><rect x="12.850" y="12.800" width="3.500" height="3.600" rx="1"/></svg>
<div class="t" style="left:1084px;top:272px;font-size:27px;color:#242424;-webkit-text-stroke:1.21px #242424;letter-spacing:1.069px;">All commits</div>
<div class="b" style="left:1031px;top:318px;width:209px;height:4px;background:#0f6cbd;border-radius:2px;"></div>
<svg class="ic" style="left:1269px;top:270px;color:#424242" width="40" height="40" viewBox="0 0 20 20" fill="none" stroke="currentColor" stroke-width="1.05" stroke-linecap="round" stroke-linejoin="round"><circle cx="5.300" cy="12.800" r="2.500"/><circle cx="15.200" cy="6.900" r="2.500"/><path d="M7.800 12.500c1.600-.2 2-1.100 2.400-2.600s.9-2.400 2.500-2.700"/></svg>
<div class="t" style="left:1321px;top:272px;font-size:27px;color:#424242;-webkit-text-stroke:0.32px #424242;letter-spacing:0.612px;">My commits</div>
<svg class="ic" style="left:1509.7px;top:270.5px;color:#424242" width="40" height="40" viewBox="0 0 20 20" fill="none" stroke="currentColor" stroke-width="1.05" stroke-linecap="round" stroke-linejoin="round"><path d="M2.500 15 7.500 10l2.800 2.800L17 6M12.500 5.500h5v5"/></svg>
<div class="t" style="left:1562px;top:272px;font-size:27px;color:#424242;-webkit-text-stroke:0.32px #424242;letter-spacing:0.589px;">My activity</div>
<svg class="ic" style="left:2303px;top:270px;color:#424242" width="40" height="40" viewBox="0 0 20 20" fill="none" stroke="currentColor" stroke-width="1.05" stroke-linecap="round" stroke-linejoin="round"><path d="M10.600 16.400H4.100a2 2 0 0 1-2-2V5.500a2 2 0 0 1 2-2h2.300a1.500 1.500 0 0 1 1.060.440L9 5.500h5.800a2 2 0 0 1 2 2v2"/><path d="M2.100 7.500h4.300a1.500 1.500 0 0 0 1.060-.440L9 5.500"/><circle cx="12.950" cy="12.300" r="2.700"/><path d="M15 14.400l3 3"/></svg>
<div class="t" style="left:2355px;top:272px;font-size:27px;color:#424242;-webkit-text-stroke:0.32px #424242;letter-spacing:-0.755px;">Recursive</div>
<svg class="ic" style="left:2478.5px;top:278.7px;color:#616161" width="23" height="23" viewBox="0 0 20 20" fill="none" stroke="currentColor" stroke-width="1.05" stroke-linecap="round" stroke-linejoin="round"><path d="M4.500 7.300 10 12.800l5.500-5.500"/></svg>
<div class="t" style="left:683px;top:348px;font-size:27px;color:#242424;-webkit-text-stroke:1.21px #242424;letter-spacing:0.389px;">Date</div>
<div class="t" style="left:750.5px;top:345.5px;font-size:39px;color:#424242;-webkit-text-stroke:0.47px #424242;">↑</div>
<div class="t" style="left:970.3px;top:348px;font-size:27px;color:#242424;-webkit-text-stroke:1.21px #242424;letter-spacing:-0.236px;">User</div>
<div class="t" style="left:1338.7px;top:348px;font-size:27px;color:#242424;-webkit-text-stroke:1.21px #242424;letter-spacing:1.256px;">Activity</div>
<div class="t" style="left:1666.8px;top:348px;font-size:27px;color:#242424;-webkit-text-stroke:1.21px #242424;letter-spacing:-0.281px;">Path</div>
<div class="t" style="left:1954.4px;top:348px;font-size:27px;color:#242424;-webkit-text-stroke:1.21px #242424;letter-spacing:0.672px;">Items</div>
<div class="t" style="left:2362.8px;top:348px;font-size:27px;color:#242424;-webkit-text-stroke:1.21px #242424;letter-spacing:-0.410px;">Role</div>
<div class="b" style="left:658px;top:402px;width:1870px;height:2px;background:#ebebeb;"></div>
<div class="clip" style="left:658px;top:403px;width:1886px;height:1380.5px">
<div class="b" style="left:0;top:1px;width:1870px;height:64px;background:#d2e3f8"></div>
<div class="t" style="left:25px;top:15px;font-size:27px;color:#242424;-webkit-text-stroke:1.21px #242424;letter-spacing:-0.234px;">2025-08-31 21:31:42</div>
<div class="b" style="left:312px;top:13px;width:40px;height:40px;border-radius:50%;background:#f9e2ae"></div>
<div class="t" style="left:322.015px;top:13.5px;font-size:19px;color:#835b00;-webkit-text-stroke:0.8px #835b00;transform:scaleX(.86);transform-origin:0 50%;">JR</div>
<div class="t" style="left:368.5px;top:15px;font-size:27px;color:#242424;-webkit-text-stroke:1.21px #242424;letter-spacing:-0.344px;">Jaime Rivas</div>
<div class="t" style="left:680.7px;top:15px;font-size:27px;color:#242424;-webkit-text-stroke:1.21px #242424;letter-spacing:0.819px;">Edited note</div>
<div class="clip" style="left:1008.8px;top:1px;width:263.5px;height:64px">
<div class="t" style="left:0px;top:14px;font-size:27px;color:#242424;-webkit-text-stroke:1.21px #242424;letter-spacing:1.294px;">Demo/Clients/Apple/Project Alpha</div>
</div>
<div class="t" style="left:1296.4px;top:15px;font-size:27px;color:#0f78d4;-webkit-text-stroke:1.21px #0f78d4;letter-spacing:1.025px;">2025-02-04 Note</div>
<div class="t" style="left:1704.8px;top:15px;font-size:27px;color:#242424;-webkit-text-stroke:1.21px #242424;letter-spacing:0.891px;">Internal</div>
<div class="t" style="left:25px;top:79px;font-size:27px;color:#242424;-webkit-text-stroke:0.32px #242424;letter-spacing:0.043px;">2025-08-29 12:57:17</div>
<div class="b" style="left:312px;top:77px;width:40px;height:40px;border-radius:50%;background:#f9e2ae"></div>
<div class="t" style="left:322.015px;top:77.5px;font-size:19px;color:#835b00;-webkit-text-stroke:0.8px #835b00;transform:scaleX(.86);transform-origin:0 50%;">JR</div>
<div class="t" style="left:368.5px;top:79px;font-size:27px;color:#242424;-webkit-text-stroke:0.32px #242424;letter-spacing:-0.844px;">Jaime Rivas</div>
<div class="t" style="left:680.7px;top:79px;font-size:27px;color:#242424;-webkit-text-stroke:0.32px #242424;letter-spacing:0.339px;">Edited note</div>
<div class="clip" style="left:1008.8px;top:65px;width:263.5px;height:64px">
<div class="t" style="left:0px;top:14px;font-size:27px;color:#242424;-webkit-text-stroke:0.32px #242424;letter-spacing:0.799px;">Demo/Clients/Apple/Project Alpha</div>
</div>
<div class="t" style="left:1296.4px;top:79px;font-size:27px;color:#0f78d4;-webkit-text-stroke:0.32px #0f78d4;letter-spacing:0.611px;">2025-02-04 Note</div>
<div class="t" style="left:1704.8px;top:79px;font-size:27px;color:#242424;-webkit-text-stroke:0.32px #242424;letter-spacing:0.277px;">Internal</div>
<div class="t" style="left:25px;top:143px;font-size:27px;color:#242424;-webkit-text-stroke:0.32px #242424;letter-spacing:0.043px;">2025-08-29 12:56:42</div>
<div class="b" style="left:312px;top:141px;width:40px;height:40px;border-radius:50%;background:#f9e2ae"></div>
<div class="t" style="left:322.015px;top:141.5px;font-size:19px;color:#835b00;-webkit-text-stroke:0.8px #835b00;transform:scaleX(.86);transform-origin:0 50%;">JR</div>
<div class="t" style="left:368.5px;top:143px;font-size:27px;color:#242424;-webkit-text-stroke:0.32px #242424;letter-spacing:-0.844px;">Jaime Rivas</div>
<div class="t" style="left:680.7px;top:143px;font-size:27px;color:#242424;-webkit-text-stroke:0.32px #242424;letter-spacing:0.059px;">Moved task</div>
<div class="clip" style="left:1008.8px;top:129px;width:263.5px;height:64px">
<div class="t" style="left:0px;top:14px;font-size:27px;color:#242424;-webkit-text-stroke:0.32px #242424;letter-spacing:0.799px;">Demo/Clients/Apple/Project Alpha</div>
</div>
<div class="t" style="left:1296.4px;top:143px;font-size:27px;color:#0f78d4;-webkit-text-stroke:0.32px #0f78d4;letter-spacing:0.308px;">Acquisition discussion</div>
<div class="t" style="left:1704.8px;top:143px;font-size:27px;color:#242424;-webkit-text-stroke:0.32px #242424;letter-spacing:0.277px;">Internal</div>
<div class="t" style="left:25px;top:207px;font-size:27px;color:#242424;-webkit-text-stroke:0.32px #242424;letter-spacing:0.043px;">2025-08-28 16:23:28</div>
<div class="b" style="left:312px;top:205px;width:40px;height:40px;border-radius:50%;background:#f9e2ae"></div>
<div class="t" style="left:322.015px;top:205.5px;font-size:19px;color:#835b00;-webkit-text-stroke:0.8px #835b00;transform:scaleX(.86);transform-origin:0 50%;">JR</div>
<div class="t" style="left:368.5px;top:207px;font-size:27px;color:#242424;-webkit-text-stroke:0.32px #242424;letter-spacing:-0.844px;">Jaime Rivas</div>
<div class="t" style="left:680.7px;top:207px;font-size:27px;color:#242424;-webkit-text-stroke:0.32px #242424;letter-spacing:0.060px;">Moved chat</div>
<div class="clip" style="left:1008.8px;top:193px;width:263.5px;height:64px">
<div class="t" style="left:0px;top:14px;font-size:27px;color:#242424;-webkit-text-stroke:0.32px #242424;letter-spacing:0.799px;">Demo/Clients/Apple/Project Alpha</div>
</div>
<div class="t" style="left:1296.4px;top:207px;font-size:27px;color:#0f78d4;-webkit-text-stroke:0.32px #0f78d4;letter-spacing:-0.110px;">Emily - Jaime</div>
<div class="t" style="left:1704.8px;top:207px;font-size:27px;color:#242424;-webkit-text-stroke:0.32px #242424;letter-spacing:0.277px;">Internal</div>
<div class="t" style="left:25px;top:271px;font-size:27px;color:#242424;-webkit-text-stroke:0.32px #242424;letter-spacing:0.043px;">2025-08-28 16:19:18</div>
<div class="b" style="left:312px;top:269px;width:40px;height:40px;border-radius:50%;background:#f9e2ae"></div>
<div class="t" style="left:322.015px;top:269.5px;font-size:19px;color:#835b00;-webkit-text-stroke:0.8px #835b00;transform:scaleX(.86);transform-origin:0 50%;">JR</div>
<div class="t" style="left:368.5px;top:271px;font-size:27px;color:#242424;-webkit-text-stroke:0.32px #242424;letter-spacing:-0.844px;">Jaime Rivas</div>
<div class="t" style="left:680.7px;top:271px;font-size:27px;color:#242424;-webkit-text-stroke:0.32px #242424;letter-spacing:0.055px;">Saved version</div>
<div class="clip" style="left:1008.8px;top:257px;width:263.5px;height:64px">
<div class="t" style="left:0px;top:14px;font-size:27px;color:#242424;-webkit-text-stroke:0.32px #242424;letter-spacing:0.799px;">Demo/Clients/Apple/Project Alpha</div>
</div>
<div class="t" style="left:1296.4px;top:271px;font-size:27px;color:#0f78d4;-webkit-text-stroke:0.32px #0f78d4;letter-spacing:-0.070px;">Synergy Form S-1.docx</div>
<div class="t" style="left:1704.8px;top:271px;font-size:27px;color:#242424;-webkit-text-stroke:0.32px #242424;letter-spacing:0.277px;">Internal</div>
<div class="t" style="left:25px;top:335px;font-size:27px;color:#242424;-webkit-text-stroke:0.32px #242424;letter-spacing:0.043px;">2025-08-28 16:18:41</div>
<div class="b" style="left:312px;top:333px;width:40px;height:40px;border-radius:50%;background:#f9e2ae"></div>
<div class="t" style="left:322.015px;top:333.5px;font-size:19px;color:#835b00;-webkit-text-stroke:0.8px #835b00;transform:scaleX(.86);transform-origin:0 50%;">JR</div>
<div class="t" style="left:368.5px;top:335px;font-size:27px;color:#242424;-webkit-text-stroke:0.32px #242424;letter-spacing:-0.844px;">Jaime Rivas</div>
<div class="t" style="left:680.7px;top:335px;font-size:27px;color:#242424;-webkit-text-stroke:0.32px #242424;letter-spacing:0.048px;">Saved current version</div>
<div class="clip" style="left:1008.8px;top:321px;width:263.5px;height:64px">
<div class="t" style="left:0px;top:14px;font-size:27px;color:#242424;-webkit-text-stroke:0.32px #242424;letter-spacing:0.799px;">Demo/Clients/Apple/Project Alpha</div>
</div>
<div class="t" style="left:1296.4px;top:335px;font-size:27px;color:#0f78d4;-webkit-text-stroke:0.32px #0f78d4;letter-spacing:-0.070px;">Synergy Form S-1.docx</div>
<div class="t" style="left:1704.8px;top:335px;font-size:27px;color:#242424;-webkit-text-stroke:0.32px #242424;letter-spacing:0.277px;">Internal</div>
<div class="t" style="left:25px;top:399px;font-size:27px;color:#242424;-webkit-text-stroke:0.32px #242424;letter-spacing:0.043px;">2025-08-28 16:18:30</div>
<div class="b" style="left:312px;top:397px;width:40px;height:40px;border-radius:50%;background:#f9e2ae"></div>
<div class="t" style="left:322.015px;top:397.5px;font-size:19px;color:#835b00;-webkit-text-stroke:0.8px #835b00;transform:scaleX(.86);transform-origin:0 50%;">JR</div>
<div class="t" style="left:368.5px;top:399px;font-size:27px;color:#242424;-webkit-text-stroke:0.32px #242424;letter-spacing:-0.844px;">Jaime Rivas</div>
<div class="t" style="left:680.7px;top:399px;font-size:27px;color:#242424;-webkit-text-stroke:0.32px #242424;letter-spacing:0.048px;">Saved current version</div>
<div class="clip" style="left:1008.8px;top:385px;width:263.5px;height:64px">
<div class="t" style="left:0px;top:14px;font-size:27px;color:#242424;-webkit-text-stroke:0.32px #242424;letter-spacing:0.799px;">Demo/Clients/Apple/Project Alpha</div>
</div>
<div class="t" style="left:1296.4px;top:399px;font-size:27px;color:#0f78d4;-webkit-text-stroke:0.32px #0f78d4;letter-spacing:-0.070px;">Synergy Form S-1.docx</div>
<div class="t" style="left:1704.8px;top:399px;font-size:27px;color:#242424;-webkit-text-stroke:0.32px #242424;letter-spacing:0.277px;">Internal</div>
<div class="t" style="left:25px;top:463px;font-size:27px;color:#242424;-webkit-text-stroke:0.32px #242424;letter-spacing:0.043px;">2025-08-28 16:17:28</div>
<div class="b" style="left:312px;top:461px;width:40px;height:40px;border-radius:50%;background:#f9e2ae"></div>
<div class="t" style="left:322.015px;top:461.5px;font-size:19px;color:#835b00;-webkit-text-stroke:0.8px #835b00;transform:scaleX(.86);transform-origin:0 50%;">JR</div>
<div class="t" style="left:368.5px;top:463px;font-size:27px;color:#242424;-webkit-text-stroke:0.32px #242424;letter-spacing:-0.844px;">Jaime Rivas</div>
<div class="t" style="left:680.7px;top:463px;font-size:27px;color:#242424;-webkit-text-stroke:0.32px #242424;letter-spacing:0.048px;">Saved current version</div>
<div class="clip" style="left:1008.8px;top:449px;width:263.5px;height:64px">
<div class="t" style="left:0px;top:14px;font-size:27px;color:#242424;-webkit-text-stroke:0.32px #242424;letter-spacing:0.799px;">Demo/Clients/Apple/Project Alpha</div>
</div>
<div class="t" style="left:1296.4px;top:463px;font-size:27px;color:#0f78d4;-webkit-text-stroke:0.32px #0f78d4;letter-spacing:-0.070px;">Synergy Form S-1.docx</div>
<div class="t" style="left:1704.8px;top:463px;font-size:27px;color:#242424;-webkit-text-stroke:0.32px #242424;letter-spacing:0.277px;">Internal</div>
<div class="t" style="left:25px;top:527px;font-size:27px;color:#242424;-webkit-text-stroke:0.32px #242424;letter-spacing:0.043px;">2025-08-28 16:17:03</div>
<div class="b" style="left:312px;top:525px;width:40px;height:40px;border-radius:50%;background:#f9e2ae"></div>
<div class="t" style="left:322.015px;top:525.5px;font-size:19px;color:#835b00;-webkit-text-stroke:0.8px #835b00;transform:scaleX(.86);transform-origin:0 50%;">JR</div>
<div class="t" style="left:368.5px;top:527px;font-size:27px;color:#242424;-webkit-text-stroke:0.32px #242424;letter-spacing:-0.844px;">Jaime Rivas</div>
<div class="t" style="left:680.7px;top:527px;font-size:27px;color:#242424;-webkit-text-stroke:0.32px #242424;letter-spacing:0.048px;">Saved current version</div>
<div class="clip" style="left:1008.8px;top:513px;width:263.5px;height:64px">
<div class="t" style="left:0px;top:14px;font-size:27px;color:#242424;-webkit-text-stroke:0.32px #242424;letter-spacing:0.799px;">Demo/Clients/Apple/Project Alpha</div>
</div>
<div class="t" style="left:1296.4px;top:527px;font-size:27px;color:#0f78d4;-webkit-text-stroke:0.32px #0f78d4;letter-spacing:-0.070px;">Synergy Form S-1.docx</div>
<div class="t" style="left:1704.8px;top:527px;font-size:27px;color:#242424;-webkit-text-stroke:0.32px #242424;letter-spacing:0.277px;">Internal</div>
<div class="t" style="left:25px;top:591px;font-size:27px;color:#242424;-webkit-text-stroke:0.32px #242424;letter-spacing:0.043px;">2025-08-28 15:36:14</div>
<div class="b" style="left:312px;top:589px;width:40px;height:40px;border-radius:50%;background:#d69ca5"></div>
<div class="t" style="left:320.65px;top:589.5px;font-size:19px;color:#4f0c16;-webkit-text-stroke:0.8px #4f0c16;transform:scaleX(.86);transform-origin:0 50%;">EH</div>
<div class="t" style="left:368.5px;top:591px;font-size:27px;color:#242424;-webkit-text-stroke:0.32px #242424;letter-spacing:-0.173px;">Emily Harris</div>
<div class="t" style="left:680.7px;top:591px;font-size:27px;color:#242424;-webkit-text-stroke:0.32px #242424;letter-spacing:0.339px;">Edited note</div>
<div class="clip" style="left:1008.8px;top:577px;width:263.5px;height:64px">
<div class="t" style="left:0px;top:14px;font-size:27px;color:#242424;-webkit-text-stroke:0.32px #242424;letter-spacing:0.799px;">Demo/Clients/Apple/Project Alpha</div>
</div>
<div class="t" style="left:1296.4px;top:591px;font-size:27px;color:#0f78d4;-webkit-text-stroke:0.32px #0f78d4;letter-spacing:0.611px;">2025-02-04 Note</div>
<div class="t" style="left:1704.8px;top:591px;font-size:27px;color:#242424;-webkit-text-stroke:0.32px #242424;letter-spacing:0.277px;">Internal</div>
<div class="t" style="left:25px;top:655px;font-size:27px;color:#242424;-webkit-text-stroke:0.32px #242424;letter-spacing:0.043px;">2025-08-28 15:34:19</div>
<div class="b" style="left:312px;top:653px;width:40px;height:40px;border-radius:50%;background:#d69ca5"></div>
<div class="t" style="left:320.65px;top:653.5px;font-size:19px;color:#4f0c16;-webkit-text-stroke:0.8px #4f0c16;transform:scaleX(.86);transform-origin:0 50%;">EH</div>
<div class="t" style="left:368.5px;top:655px;font-size:27px;color:#242424;-webkit-text-stroke:0.32px #242424;letter-spacing:-0.173px;">Emily Harris</div>
<div class="t" style="left:680.7px;top:655px;font-size:27px;color:#242424;-webkit-text-stroke:0.32px #242424;letter-spacing:0.047px;">Deleted file</div>
<div class="clip" style="left:1008.8px;top:641px;width:263.5px;height:64px">
<div class="t" style="left:0px;top:14px;font-size:27px;color:#242424;-webkit-text-stroke:0.32px #242424;letter-spacing:0.799px;">Demo/Clients/Apple/Project Alpha</div>
</div>
<div class="t" style="left:1296.4px;top:655px;font-size:27px;color:#0f78d4;-webkit-text-stroke:0.32px #0f78d4;letter-spacing:-0.276px;">Synergy Form S-1_revision_2.01</div>
<div class="t" style="left:1704.8px;top:655px;font-size:27px;color:#242424;-webkit-text-stroke:0.32px #242424;letter-spacing:0.277px;">Internal</div>
<div class="t" style="left:25px;top:719px;font-size:27px;color:#242424;-webkit-text-stroke:0.32px #242424;letter-spacing:0.043px;">2025-08-28 15:34:19</div>
<div class="b" style="left:312px;top:717px;width:40px;height:40px;border-radius:50%;background:#d69ca5"></div>
<div class="t" style="left:320.65px;top:717.5px;font-size:19px;color:#4f0c16;-webkit-text-stroke:0.8px #4f0c16;transform:scaleX(.86);transform-origin:0 50%;">EH</div>
<div class="t" style="left:368.5px;top:719px;font-size:27px;color:#242424;-webkit-text-stroke:0.32px #242424;letter-spacing:-0.173px;">Emily Harris</div>
<div class="t" style="left:680.7px;top:719px;font-size:27px;color:#242424;-webkit-text-stroke:0.32px #242424;letter-spacing:0.052px;">Deleted version</div>
<div class="clip" style="left:1008.8px;top:705px;width:263.5px;height:64px">
<div class="t" style="left:0px;top:14px;font-size:27px;color:#242424;-webkit-text-stroke:0.32px #242424;letter-spacing:0.799px;">Demo/Clients/Apple/Project Alpha</div>
</div>
<div class="t" style="left:1296.4px;top:719px;font-size:27px;color:#0f78d4;-webkit-text-stroke:0.32px #0f78d4;letter-spacing:-0.070px;">Synergy Form S-1.docx</div>
<div class="t" style="left:1704.8px;top:719px;font-size:27px;color:#242424;-webkit-text-stroke:0.32px #242424;letter-spacing:0.277px;">Internal</div>
<div class="t" style="left:25px;top:783px;font-size:27px;color:#242424;-webkit-text-stroke:0.32px #242424;letter-spacing:0.043px;">2025-08-28 15:33:59</div>
<div class="b" style="left:312px;top:781px;width:40px;height:40px;border-radius:50%;background:#d69ca5"></div>
<div class="t" style="left:320.65px;top:781.5px;font-size:19px;color:#4f0c16;-webkit-text-stroke:0.8px #4f0c16;transform:scaleX(.86);transform-origin:0 50%;">EH</div>
<div class="t" style="left:368.5px;top:783px;font-size:27px;color:#242424;-webkit-text-stroke:0.32px #242424;letter-spacing:-0.173px;">Emily Harris</div>
<div class="t" style="left:680.7px;top:783px;font-size:27px;color:#242424;-webkit-text-stroke:0.32px #242424;letter-spacing:0.055px;">Saved version</div>
<div class="clip" style="left:1008.8px;top:769px;width:263.5px;height:64px">
<div class="t" style="left:0px;top:14px;font-size:27px;color:#242424;-webkit-text-stroke:0.32px #242424;letter-spacing:0.799px;">Demo/Clients/Apple/Project Alpha</div>
</div>
<div class="t" style="left:1296.4px;top:783px;font-size:27px;color:#0f78d4;-webkit-text-stroke:0.32px #0f78d4;letter-spacing:-0.070px;">Synergy Form S-1.docx</div>
<div class="t" style="left:1704.8px;top:783px;font-size:27px;color:#242424;-webkit-text-stroke:0.32px #242424;letter-spacing:0.277px;">Internal</div>
<div class="t" style="left:25px;top:847px;font-size:27px;color:#242424;-webkit-text-stroke:0.32px #242424;letter-spacing:0.043px;">2025-08-28 15:33:55</div>
<div class="b" style="left:312px;top:845px;width:40px;height:40px;border-radius:50%;background:#d69ca5"></div>
<div class="t" style="left:320.65px;top:845.5px;font-size:19px;color:#4f0c16;-webkit-text-stroke:0.8px #4f0c16;transform:scaleX(.86);transform-origin:0 50%;">EH</div>
<div class="t" style="left:368.5px;top:847px;font-size:27px;color:#242424;-webkit-text-stroke:0.32px #242424;letter-spacing:-0.173px;">Emily Harris</div>
<div class="t" style="left:680.7px;top:847px;font-size:27px;color:#242424;-webkit-text-stroke:0.32px #242424;letter-spacing:0.048px;">Saved current version</div>
<div class="clip" style="left:1008.8px;top:833px;width:263.5px;height:64px">
<div class="t" style="left:0px;top:14px;font-size:27px;color:#242424;-webkit-text-stroke:0.32px #242424;letter-spacing:0.799px;">Demo/Clients/Apple/Project Alpha</div>
</div>
<div class="t" style="left:1296.4px;top:847px;font-size:27px;color:#0f78d4;-webkit-text-stroke:0.32px #0f78d4;letter-spacing:-0.070px;">Synergy Form S-1.docx</div>
<div class="t" style="left:1704.8px;top:847px;font-size:27px;color:#242424;-webkit-text-stroke:0.32px #242424;letter-spacing:0.277px;">Internal</div>
<div class="t" style="left:25px;top:911px;font-size:27px;color:#242424;-webkit-text-stroke:0.32px #242424;letter-spacing:0.043px;">2025-08-19 15:24:46</div>
<div class="b" style="left:312px;top:909px;width:40px;height:40px;border-radius:50%;background:#f9e2ae"></div>
<div class="t" style="left:322.015px;top:909.5px;font-size:19px;color:#835b00;-webkit-text-stroke:0.8px #835b00;transform:scaleX(.86);transform-origin:0 50%;">JR</div>
<div class="t" style="left:368.5px;top:911px;font-size:27px;color:#242424;-webkit-text-stroke:0.32px #242424;letter-spacing:-0.844px;">Jaime Rivas</div>
<div class="t" style="left:680.7px;top:911px;font-size:27px;color:#242424;-webkit-text-stroke:0.32px #242424;letter-spacing:0.047px;">Deleted file</div>
<div class="clip" style="left:1008.8px;top:897px;width:263.5px;height:64px">
<div class="t" style="left:0px;top:14px;font-size:27px;color:#242424;-webkit-text-stroke:0.32px #242424;letter-spacing:0.799px;">Demo/Clients/Apple/Project Alpha</div>
</div>
<div class="t" style="left:1296.4px;top:911px;font-size:27px;color:#0f78d4;-webkit-text-stroke:0.32px #0f78d4;letter-spacing:-0.276px;">Synergy Form S-1_revision_2.01</div>
<div class="t" style="left:1704.8px;top:911px;font-size:27px;color:#242424;-webkit-text-stroke:0.32px #242424;letter-spacing:0.277px;">Internal</div>
<div class="t" style="left:25px;top:975px;font-size:27px;color:#242424;-webkit-text-stroke:0.32px #242424;letter-spacing:0.043px;">2025-08-19 15:24:43</div>
<div class="b" style="left:312px;top:973px;width:40px;height:40px;border-radius:50%;background:#f9e2ae"></div>
<div class="t" style="left:322.015px;top:973.5px;font-size:19px;color:#835b00;-webkit-text-stroke:0.8px #835b00;transform:scaleX(.86);transform-origin:0 50%;">JR</div>
<div class="t" style="left:368.5px;top:975px;font-size:27px;color:#242424;-webkit-text-stroke:0.32px #242424;letter-spacing:-0.844px;">Jaime Rivas</div>
<div class="t" style="left:680.7px;top:975px;font-size:27px;color:#242424;-webkit-text-stroke:0.32px #242424;letter-spacing:0.052px;">Deleted version</div>
<div class="clip" style="left:1008.8px;top:961px;width:263.5px;height:64px">
<div class="t" style="left:0px;top:14px;font-size:27px;color:#242424;-webkit-text-stroke:0.32px #242424;letter-spacing:0.799px;">Demo/Clients/Apple/Project Alpha</div>
</div>
<div class="t" style="left:1296.4px;top:975px;font-size:27px;color:#0f78d4;-webkit-text-stroke:0.32px #0f78d4;letter-spacing:-0.070px;">Synergy Form S-1.docx</div>
<div class="t" style="left:1704.8px;top:975px;font-size:27px;color:#242424;-webkit-text-stroke:0.32px #242424;letter-spacing:0.277px;">Internal</div>
<div class="t" style="left:25px;top:1039px;font-size:27px;color:#242424;-webkit-text-stroke:0.32px #242424;letter-spacing:0.043px;">2025-08-13 18:58:34</div>
<div class="b" style="left:312px;top:1037px;width:40px;height:40px;border-radius:50%;background:#f9e2ae"></div>
<div class="t" style="left:322.015px;top:1037.5px;font-size:19px;color:#835b00;-webkit-text-stroke:0.8px #835b00;transform:scaleX(.86);transform-origin:0 50%;">JR</div>
<div class="t" style="left:368.5px;top:1039px;font-size:27px;color:#242424;-webkit-text-stroke:0.32px #242424;letter-spacing:-0.844px;">Jaime Rivas</div>
<div class="t" style="left:680.7px;top:1039px;font-size:27px;color:#242424;-webkit-text-stroke:0.32px #242424;letter-spacing:0.055px;">Saved version</div>
<div class="clip" style="left:1008.8px;top:1025px;width:263.5px;height:64px">
<div class="t" style="left:0px;top:14px;font-size:27px;color:#242424;-webkit-text-stroke:0.32px #242424;letter-spacing:0.799px;">Demo/Clients/Apple/Project Alpha</div>
</div>
<div class="t" style="left:1296.4px;top:1039px;font-size:27px;color:#0f78d4;-webkit-text-stroke:0.32px #0f78d4;letter-spacing:-0.070px;">Synergy Form S-1.docx</div>
<div class="t" style="left:1704.8px;top:1039px;font-size:27px;color:#242424;-webkit-text-stroke:0.32px #242424;letter-spacing:0.277px;">Internal</div>
<div class="t" style="left:25px;top:1103px;font-size:27px;color:#242424;-webkit-text-stroke:0.32px #242424;letter-spacing:0.043px;">2025-08-13 18:58:25</div>
<div class="b" style="left:312px;top:1101px;width:40px;height:40px;border-radius:50%;background:#f9e2ae"></div>
<div class="t" style="left:322.015px;top:1101.5px;font-size:19px;color:#835b00;-webkit-text-stroke:0.8px #835b00;transform:scaleX(.86);transform-origin:0 50%;">JR</div>
<div class="t" style="left:368.5px;top:1103px;font-size:27px;color:#242424;-webkit-text-stroke:0.32px #242424;letter-spacing:-0.844px;">Jaime Rivas</div>
<div class="t" style="left:680.7px;top:1103px;font-size:27px;color:#242424;-webkit-text-stroke:0.32px #242424;letter-spacing:0.048px;">Saved current version</div>
<div class="clip" style="left:1008.8px;top:1089px;width:263.5px;height:64px">
<div class="t" style="left:0px;top:14px;font-size:27px;color:#242424;-webkit-text-stroke:0.32px #242424;letter-spacing:0.799px;">Demo/Clients/Apple/Project Alpha</div>
</div>
<div class="t" style="left:1296.4px;top:1103px;font-size:27px;color:#0f78d4;-webkit-text-stroke:0.32px #0f78d4;letter-spacing:-0.070px;">Synergy Form S-1.docx</div>
<div class="t" style="left:1704.8px;top:1103px;font-size:27px;color:#242424;-webkit-text-stroke:0.32px #242424;letter-spacing:0.277px;">Internal</div>
<div class="t" style="left:25px;top:1167px;font-size:27px;color:#242424;-webkit-text-stroke:0.32px #242424;letter-spacing:0.043px;">2025-08-13 18:57:34</div>
<div class="b" style="left:312px;top:1165px;width:40px;height:40px;border-radius:50%;background:#f9e2ae"></div>
<div class="t" style="left:322.015px;top:1165.5px;font-size:19px;color:#835b00;-webkit-text-stroke:0.8px #835b00;transform:scaleX(.86);transform-origin:0 50%;">JR</div>
<div class="t" style="left:368.5px;top:1167px;font-size:27px;color:#242424;-webkit-text-stroke:0.32px #242424;letter-spacing:-0.844px;">Jaime Rivas</div>
<div class="t" style="left:680.7px;top:1167px;font-size:27px;color:#242424;-webkit-text-stroke:0.32px #242424;letter-spacing:0.047px;">Deleted file</div>
<div class="clip" style="left:1008.8px;top:1153px;width:263.5px;height:64px">
<div class="t" style="left:0px;top:14px;font-size:27px;color:#242424;-webkit-text-stroke:0.32px #242424;letter-spacing:0.799px;">Demo/Clients/Apple/Project Alpha</div>
</div>
<div class="t" style="left:1296.4px;top:1167px;font-size:27px;color:#0f78d4;-webkit-text-stroke:0.32px #0f78d4;letter-spacing:-0.276px;">Synergy Form S-1_revision_2.01</div>
<div class="t" style="left:1704.8px;top:1167px;font-size:27px;color:#242424;-webkit-text-stroke:0.32px #242424;letter-spacing:0.277px;">Internal</div>
<div class="t" style="left:25px;top:1231px;font-size:27px;color:#242424;-webkit-text-stroke:0.32px #242424;letter-spacing:0.043px;">2025-08-13 18:57:33</div>
<div class="b" style="left:312px;top:1229px;width:40px;height:40px;border-radius:50%;background:#f9e2ae"></div>
<div class="t" style="left:322.015px;top:1229.5px;font-size:19px;color:#835b00;-webkit-text-stroke:0.8px #835b00;transform:scaleX(.86);transform-origin:0 50%;">JR</div>
<div class="t" style="left:368.5px;top:1231px;font-size:27px;color:#242424;-webkit-text-stroke:0.32px #242424;letter-spacing:-0.844px;">Jaime Rivas</div>
<div class="t" style="left:680.7px;top:1231px;font-size:27px;color:#242424;-webkit-text-stroke:0.32px #242424;letter-spacing:0.052px;">Deleted version</div>
<div class="clip" style="left:1008.8px;top:1217px;width:263.5px;height:64px">
<div class="t" style="left:0px;top:14px;font-size:27px;color:#242424;-webkit-text-stroke:0.32px #242424;letter-spacing:0.799px;">Demo/Clients/Apple/Project Alpha</div>
</div>
<div class="t" style="left:1296.4px;top:1231px;font-size:27px;color:#0f78d4;-webkit-text-stroke:0.32px #0f78d4;letter-spacing:-0.070px;">Synergy Form S-1.docx</div>
<div class="t" style="left:1704.8px;top:1231px;font-size:27px;color:#242424;-webkit-text-stroke:0.32px #242424;letter-spacing:0.277px;">Internal</div>
<div class="t" style="left:25px;top:1295px;font-size:27px;color:#242424;-webkit-text-stroke:0.32px #242424;letter-spacing:0.043px;">2025-08-13 18:56:30</div>
<div class="b" style="left:312px;top:1293px;width:40px;height:40px;border-radius:50%;background:#f9e2ae"></div>
<div class="t" style="left:322.015px;top:1293.5px;font-size:19px;color:#835b00;-webkit-text-stroke:0.8px #835b00;transform:scaleX(.86);transform-origin:0 50%;">JR</div>
<div class="t" style="left:368.5px;top:1295px;font-size:27px;color:#242424;-webkit-text-stroke:0.32px #242424;letter-spacing:-0.844px;">Jaime Rivas</div>
<div class="t" style="left:680.7px;top:1295px;font-size:27px;color:#242424;-webkit-text-stroke:0.32px #242424;letter-spacing:0.055px;">Saved version</div>
<div class="clip" style="left:1008.8px;top:1281px;width:263.5px;height:64px">
<div class="t" style="left:0px;top:14px;font-size:27px;color:#242424;-webkit-text-stroke:0.32px #242424;letter-spacing:0.799px;">Demo/Clients/Apple/Project Alpha</div>
</div>
<div class="t" style="left:1296.4px;top:1295px;font-size:27px;color:#0f78d4;-webkit-text-stroke:0.32px #0f78d4;letter-spacing:-0.070px;">Synergy Form S-1.docx</div>
<div class="t" style="left:1704.8px;top:1295px;font-size:27px;color:#242424;-webkit-text-stroke:0.32px #242424;letter-spacing:0.277px;">Internal</div>
<div class="t" style="left:25px;top:1359px;font-size:27px;color:#242424;-webkit-text-stroke:0.32px #242424;letter-spacing:0.043px;">2025-08-13 18:56:16</div>
<div class="b" style="left:312px;top:1357px;width:40px;height:40px;border-radius:50%;background:#f9e2ae"></div>
<div class="t" style="left:322.015px;top:1357.5px;font-size:19px;color:#835b00;-webkit-text-stroke:0.8px #835b00;transform:scaleX(.86);transform-origin:0 50%;">JR</div>
<div class="t" style="left:368.5px;top:1359px;font-size:27px;color:#242424;-webkit-text-stroke:0.32px #242424;letter-spacing:-0.844px;">Jaime Rivas</div>
<div class="t" style="left:680.7px;top:1359px;font-size:27px;color:#242424;-webkit-text-stroke:0.32px #242424;letter-spacing:0.048px;">Saved current version</div>
<div class="clip" style="left:1008.8px;top:1345px;width:263.5px;height:64px">
<div class="t" style="left:0px;top:14px;font-size:27px;color:#242424;-webkit-text-stroke:0.32px #242424;letter-spacing:0.799px;">Demo/Clients/Apple/Project Alpha</div>
</div>
<div class="t" style="left:1296.4px;top:1359px;font-size:27px;color:#0f78d4;-webkit-text-stroke:0.32px #0f78d4;letter-spacing:-0.070px;">Synergy Form S-1.docx</div>
<div class="t" style="left:1704.8px;top:1359px;font-size:27px;color:#242424;-webkit-text-stroke:0.32px #242424;letter-spacing:0.277px;">Internal</div>
</div>
<div class="t" style="left:2562.9px;top:195.5px;font-size:28px;color:#242424;font-weight:700;-webkit-text-stroke:0.45px #242424;letter-spacing:0.229px;">Info</div>
<div class="b" style="left:2562px;top:256px;width:542px;height:2px;background:#e0e0e0;"></div>
<div class="t" style="left:2562.5px;top:276px;font-size:23.5px;color:#605e5c;-webkit-text-stroke:0.28px #605e5c;letter-spacing:-0.717px;">Date:</div>
<div class="t" style="left:2562.5px;top:316px;font-size:27px;color:#242424;-webkit-text-stroke:0.32px #242424;letter-spacing:0.054px;">2025-08-31 21:31:42</div>
<div class="t" style="left:2562.5px;top:372px;font-size:23.5px;color:#605e5c;-webkit-text-stroke:0.28px #605e5c;letter-spacing:-1.037px;">User:</div>
<div class="b" style="left:2562px;top:410px;width:40px;height:40px;border-radius:50%;background:#f9e2ae"></div>
<div class="t" style="left:2572.01px;top:410.5px;font-size:19px;color:#835b00;-webkit-text-stroke:0.8px #835b00;transform:scaleX(.86);transform-origin:0 50%;">JR</div>
<div class="t" style="left:2618px;top:411px;font-size:27px;color:#242424;-webkit-text-stroke:0.32px #242424;letter-spacing:-0.844px;">Jaime Rivas</div>
<div class="t" style="left:2562.5px;top:468px;font-size:23.5px;color:#605e5c;-webkit-text-stroke:0.28px #605e5c;letter-spacing:-1.015px;">Role:</div>
<div class="t" style="left:2562.5px;top:508px;font-size:27px;color:#242424;-webkit-text-stroke:0.32px #242424;letter-spacing:0.277px;">Internal</div>
<div class="t" style="left:2562.5px;top:564px;font-size:23.5px;color:#605e5c;-webkit-text-stroke:0.28px #605e5c;letter-spacing:-1.218px;">Path:</div>
<div class="t" style="left:2562.5px;top:604px;font-size:27px;color:#242424;-webkit-text-stroke:0.32px #242424;letter-spacing:0.670px;">Demo/Clients/Apple/Project Alpha</div>
<div class="t" style="left:2562.5px;top:660px;font-size:23.5px;color:#605e5c;-webkit-text-stroke:0.28px #605e5c;letter-spacing:0.131px;">Activity:</div>
<div class="t" style="left:2562.5px;top:700px;font-size:27px;color:#242424;-webkit-text-stroke:0.32px #242424;letter-spacing:0.339px;">Edited note</div>
<div class="t" style="left:2562.5px;top:756px;font-size:23.5px;color:#605e5c;-webkit-text-stroke:0.28px #605e5c;letter-spacing:-0.396px;">Items:</div>
<div class="t" style="left:2562.5px;top:796px;font-size:27px;color:#0f78d4;-webkit-text-stroke:0.32px #0f78d4;letter-spacing:0.611px;">2025-02-04 Note</div>
<div class="t" style="left:2562.5px;top:852px;font-size:23.5px;color:#605e5c;-webkit-text-stroke:0.28px #605e5c;letter-spacing:-0.337px;">Details:</div>
<div class="t" style="left:2562.5px;top:892px;font-size:27px;color:#242424;-webkit-text-stroke:0.32px #242424;">-</div>
<div class="t" style="left:2562.5px;top:948px;font-size:23.5px;color:#605e5c;-webkit-text-stroke:0.28px #605e5c;letter-spacing:-0.628px;">Check:</div>
<div class="b" style="left:2648px;top:950px;width:32px;height:32px;background:transparent;border:2px solid #616161;border-radius:5px;box-sizing:border-box;"></div>
<div class="t" style="left:2562.5px;top:1004px;font-size:23.5px;color:#605e5c;-webkit-text-stroke:0.28px #605e5c;letter-spacing:-0.143px;">Comments:</div>
<div class="b" style="left:2562px;top:1052px;width:542px;height:64px;background:#ebebeb;"></div>
<div class="t" style="left:2578.4px;top:1066px;font-size:23.5px;color:#605e5c;-webkit-text-stroke:0.28px #605e5c;letter-spacing:0.110px;">Add comment...</div>
<div class="b" style="left:3129px;top:182px;width:64px;height:64px;background:#d5d5d5;border-radius:8px;"></div>
<svg class="ic" style="left:3141px;top:194px;color:#424242" width="40" height="40" viewBox="0 0 20 20" fill="none" stroke="currentColor" stroke-width="0.95" stroke-linecap="round" stroke-linejoin="round"><circle cx="10" cy="10" r="7.500"/><path d="M10 9v4.600"/><circle cx="10" cy="6.700" r=".8" fill="currentColor" stroke="none"/></svg>
</div></body></html>
